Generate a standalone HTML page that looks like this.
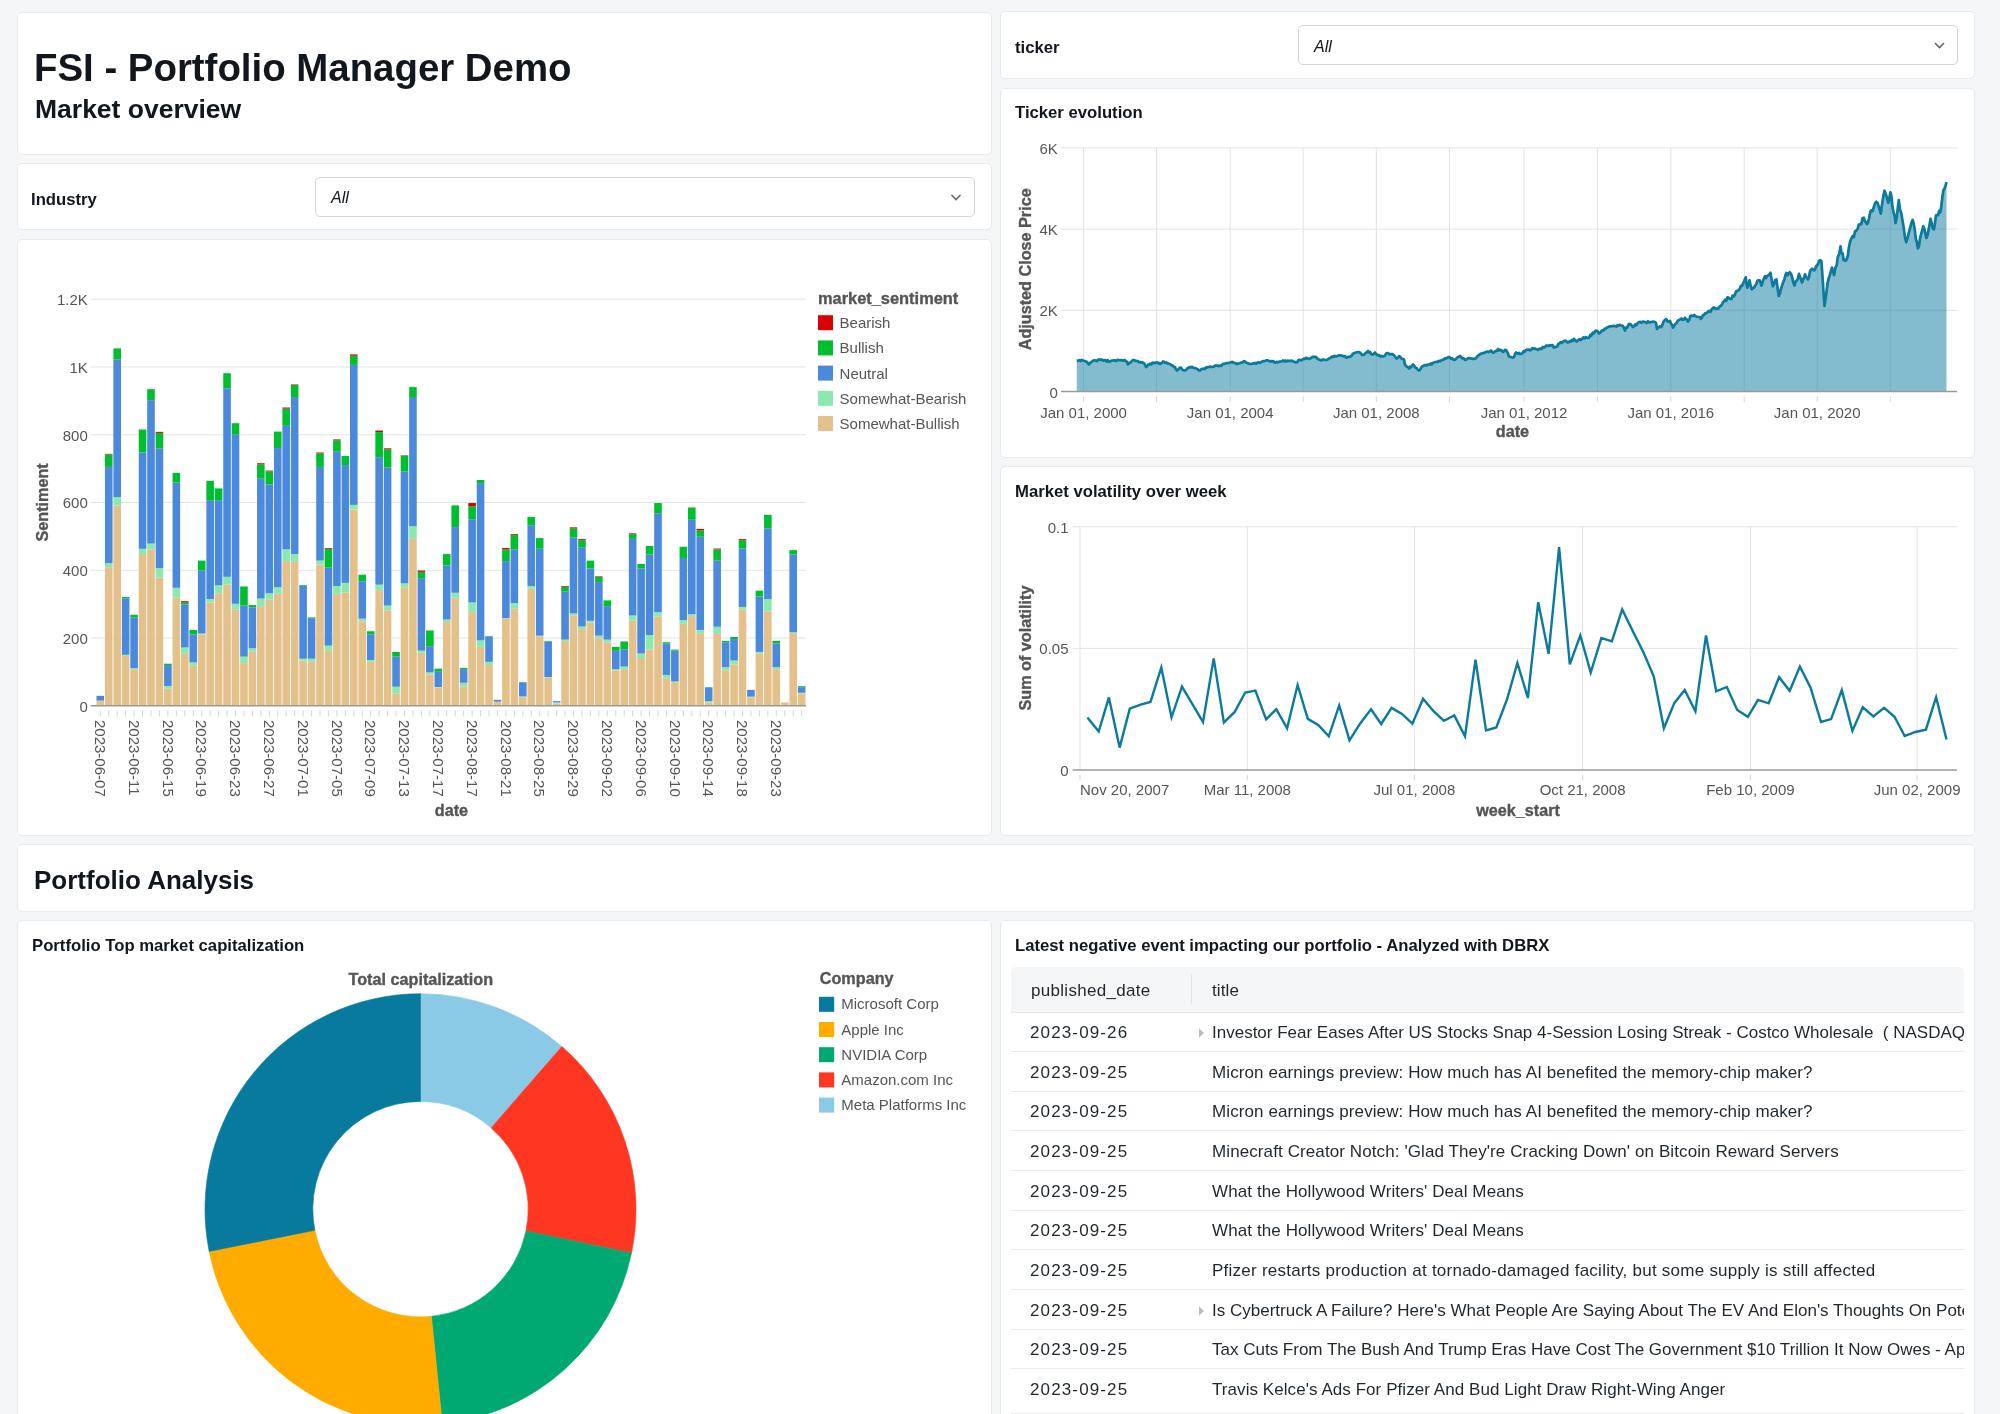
<!DOCTYPE html><html><head><meta charset="utf-8"><style>

*{margin:0;padding:0;box-sizing:border-box}
html,body{width:2000px;height:1414px;overflow:hidden;background:#f5f6f8;font-family:"Liberation Sans", sans-serif;}
.card{position:absolute;background:#fff;border:1px solid #e8eaec;border-radius:5px;overflow:hidden}
.t{position:absolute;white-space:nowrap;line-height:1}
svg{position:absolute;left:0;top:0;will-change:transform}
.t{will-change:transform}
.sel{position:absolute;background:#fff;border:1px solid #cdd6df;border-radius:5px}

</style></head><body>
<div class="card" style="left:17px;top:12px;width:974.5px;height:142.7px"></div>
<div class="card" style="left:17px;top:162.7px;width:974.5px;height:67.80000000000001px"></div>
<div class="card" style="left:17px;top:238.5px;width:974.5px;height:597.7px"></div>
<div class="card" style="left:1000px;top:11.4px;width:974.8px;height:67.6px"></div>
<div class="card" style="left:1000px;top:87.5px;width:974.8px;height:370.6px"></div>
<div class="card" style="left:1000px;top:466.1px;width:974.8px;height:370.1px"></div>
<div class="card" style="left:17px;top:844.2px;width:1957.8px;height:67.5px"></div>
<div class="card" style="left:17px;top:920px;width:974.5px;height:520px"></div>
<div class="card" style="left:1000px;top:920px;width:974.8px;height:520px"></div>
<div class="t" style="left:33.8px;top:48.75px;font-size:38.4px;font-weight:bold;color:#11171c;font-style:normal;letter-spacing:0px;">FSI - Portfolio Manager Demo</div>
<div class="t" style="left:34.6px;top:96.32px;font-size:26.5px;font-weight:bold;color:#11171c;font-style:normal;letter-spacing:0px;">Market overview</div>
<div class="t" style="left:31px;top:191.89px;font-size:16.7px;font-weight:bold;color:#11171c;font-style:normal;letter-spacing:0px;">Industry</div>
<div class="sel" style="left:314.5px;top:177px;width:660px;height:39.5px"></div>
<div class="t" style="left:330.5px;top:189.72px;font-size:16px;font-weight:normal;color:#11171c;font-style:italic;letter-spacing:0px;">All</div>
<div class="t" style="left:1015.4px;top:40.19px;font-size:16.7px;font-weight:bold;color:#11171c;font-style:normal;letter-spacing:0px;">ticker</div>
<div class="sel" style="left:1297.5px;top:25.4px;width:660.5px;height:39.6px"></div>
<div class="t" style="left:1313.7px;top:39.42px;font-size:16px;font-weight:normal;color:#11171c;font-style:italic;letter-spacing:0px;">All</div>
<svg width="2000" height="1414" style="pointer-events:none"><path d="M951.5,195.0 L956,199.5 L960.5,195.0" fill="none" stroke="#62666b" stroke-width="1.6"/></svg>
<svg width="2000" height="1414" style="pointer-events:none"><path d="M1935.0,43.0 L1939.5,47.5 L1944.0,43.0" fill="none" stroke="#62666b" stroke-width="1.6"/></svg>
<div class="t" style="left:34.2px;top:867.07px;font-size:26px;font-weight:bold;color:#11171c;font-style:normal;letter-spacing:0px;">Portfolio Analysis</div>
<svg width="2000" height="1414" style="font-family:'Liberation Sans',sans-serif">
<line x1="90.8" x2="806" y1="638.03" y2="638.03" stroke="#e3e3e3" stroke-width="1"/>
<line x1="90.8" x2="806" y1="570.26" y2="570.26" stroke="#e3e3e3" stroke-width="1"/>
<line x1="90.8" x2="806" y1="502.49" y2="502.49" stroke="#e3e3e3" stroke-width="1"/>
<line x1="90.8" x2="806" y1="434.72" y2="434.72" stroke="#e3e3e3" stroke-width="1"/>
<line x1="90.8" x2="806" y1="366.95" y2="366.95" stroke="#e3e3e3" stroke-width="1"/>
<line x1="90.8" x2="806" y1="299.18" y2="299.18" stroke="#e3e3e3" stroke-width="1"/>
<rect x="96.50" y="700.58" width="7.6" height="5.22" fill="#e4c08b"/>
<rect x="96.50" y="695.87" width="7.6" height="4.71" fill="#4a89dc"/>
<rect x="104.95" y="567.13" width="7.6" height="138.67" fill="#e4c08b"/>
<rect x="104.95" y="563.20" width="7.6" height="3.93" fill="#8ae9ae"/>
<rect x="104.95" y="466.91" width="7.6" height="96.29" fill="#4a89dc"/>
<rect x="104.95" y="454.35" width="7.6" height="12.56" fill="#00bf2f"/>
<rect x="104.95" y="453.83" width="7.6" height="0.52" fill="#d90000"/>
<rect x="113.40" y="505.38" width="7.6" height="200.42" fill="#e4c08b"/>
<rect x="113.40" y="497.00" width="7.6" height="8.37" fill="#8ae9ae"/>
<rect x="113.40" y="359.63" width="7.6" height="137.38" fill="#4a89dc"/>
<rect x="113.40" y="348.37" width="7.6" height="11.25" fill="#00bf2f"/>
<rect x="121.85" y="655.84" width="7.6" height="49.96" fill="#e4c08b"/>
<rect x="121.85" y="654.79" width="7.6" height="1.05" fill="#8ae9ae"/>
<rect x="121.85" y="598.53" width="7.6" height="56.26" fill="#4a89dc"/>
<rect x="121.85" y="596.96" width="7.6" height="1.57" fill="#00bf2f"/>
<rect x="130.30" y="669.18" width="7.6" height="36.62" fill="#e4c08b"/>
<rect x="130.30" y="668.13" width="7.6" height="1.05" fill="#8ae9ae"/>
<rect x="130.30" y="617.37" width="7.6" height="50.76" fill="#4a89dc"/>
<rect x="130.30" y="614.75" width="7.6" height="2.62" fill="#00bf2f"/>
<rect x="138.75" y="554.05" width="7.6" height="151.75" fill="#e4c08b"/>
<rect x="138.75" y="548.81" width="7.6" height="5.23" fill="#8ae9ae"/>
<rect x="138.75" y="452.52" width="7.6" height="96.29" fill="#4a89dc"/>
<rect x="138.75" y="429.49" width="7.6" height="23.03" fill="#00bf2f"/>
<rect x="147.20" y="549.34" width="7.6" height="156.46" fill="#e4c08b"/>
<rect x="147.20" y="543.58" width="7.6" height="5.76" fill="#8ae9ae"/>
<rect x="147.20" y="400.18" width="7.6" height="143.40" fill="#4a89dc"/>
<rect x="147.20" y="389.19" width="7.6" height="10.99" fill="#00bf2f"/>
<rect x="155.65" y="577.60" width="7.6" height="128.20" fill="#e4c08b"/>
<rect x="155.65" y="568.18" width="7.6" height="9.42" fill="#8ae9ae"/>
<rect x="155.65" y="448.59" width="7.6" height="119.58" fill="#4a89dc"/>
<rect x="155.65" y="432.89" width="7.6" height="15.70" fill="#00bf2f"/>
<rect x="155.65" y="431.85" width="7.6" height="1.05" fill="#d90000"/>
<rect x="164.10" y="688.81" width="7.6" height="16.99" fill="#e4c08b"/>
<rect x="164.10" y="685.93" width="7.6" height="2.88" fill="#8ae9ae"/>
<rect x="164.10" y="664.99" width="7.6" height="20.93" fill="#4a89dc"/>
<rect x="164.10" y="663.69" width="7.6" height="1.31" fill="#00bf2f"/>
<rect x="172.55" y="597.75" width="7.6" height="108.05" fill="#e4c08b"/>
<rect x="172.55" y="587.80" width="7.6" height="9.94" fill="#8ae9ae"/>
<rect x="172.55" y="482.61" width="7.6" height="105.19" fill="#4a89dc"/>
<rect x="172.55" y="472.93" width="7.6" height="9.68" fill="#00bf2f"/>
<rect x="181.00" y="653.22" width="7.6" height="52.58" fill="#e4c08b"/>
<rect x="181.00" y="647.46" width="7.6" height="5.76" fill="#8ae9ae"/>
<rect x="181.00" y="604.29" width="7.6" height="43.18" fill="#4a89dc"/>
<rect x="181.00" y="602.19" width="7.6" height="2.09" fill="#00bf2f"/>
<rect x="181.00" y="601.15" width="7.6" height="1.05" fill="#d90000"/>
<rect x="189.45" y="665.78" width="7.6" height="40.02" fill="#e4c08b"/>
<rect x="189.45" y="662.38" width="7.6" height="3.40" fill="#8ae9ae"/>
<rect x="189.45" y="634.38" width="7.6" height="28.00" fill="#4a89dc"/>
<rect x="189.45" y="629.93" width="7.6" height="4.45" fill="#00bf2f"/>
<rect x="197.90" y="634.38" width="7.6" height="71.42" fill="#e4c08b"/>
<rect x="197.90" y="633.59" width="7.6" height="0.79" fill="#8ae9ae"/>
<rect x="197.90" y="570.27" width="7.6" height="63.32" fill="#4a89dc"/>
<rect x="197.90" y="560.59" width="7.6" height="9.68" fill="#00bf2f"/>
<rect x="206.35" y="602.46" width="7.6" height="103.34" fill="#e4c08b"/>
<rect x="206.35" y="599.05" width="7.6" height="3.40" fill="#8ae9ae"/>
<rect x="206.35" y="500.14" width="7.6" height="98.91" fill="#4a89dc"/>
<rect x="206.35" y="480.78" width="7.6" height="19.36" fill="#00bf2f"/>
<rect x="214.80" y="593.30" width="7.6" height="112.50" fill="#e4c08b"/>
<rect x="214.80" y="585.45" width="7.6" height="7.85" fill="#8ae9ae"/>
<rect x="214.80" y="500.14" width="7.6" height="85.30" fill="#4a89dc"/>
<rect x="214.80" y="488.37" width="7.6" height="11.78" fill="#00bf2f"/>
<rect x="223.25" y="584.66" width="7.6" height="121.14" fill="#e4c08b"/>
<rect x="223.25" y="576.81" width="7.6" height="7.85" fill="#8ae9ae"/>
<rect x="223.25" y="388.41" width="7.6" height="188.40" fill="#4a89dc"/>
<rect x="223.25" y="373.23" width="7.6" height="15.18" fill="#00bf2f"/>
<rect x="231.70" y="609.52" width="7.6" height="96.28" fill="#e4c08b"/>
<rect x="231.70" y="603.76" width="7.6" height="5.76" fill="#8ae9ae"/>
<rect x="231.70" y="434.72" width="7.6" height="169.04" fill="#4a89dc"/>
<rect x="231.70" y="423.21" width="7.6" height="11.51" fill="#00bf2f"/>
<rect x="240.15" y="663.16" width="7.6" height="42.64" fill="#e4c08b"/>
<rect x="240.15" y="656.62" width="7.6" height="6.54" fill="#8ae9ae"/>
<rect x="240.15" y="605.60" width="7.6" height="51.03" fill="#4a89dc"/>
<rect x="240.15" y="586.49" width="7.6" height="19.10" fill="#00bf2f"/>
<rect x="248.60" y="651.39" width="7.6" height="54.41" fill="#e4c08b"/>
<rect x="248.60" y="648.25" width="7.6" height="3.14" fill="#8ae9ae"/>
<rect x="248.60" y="607.43" width="7.6" height="40.82" fill="#4a89dc"/>
<rect x="248.60" y="605.07" width="7.6" height="2.36" fill="#00bf2f"/>
<rect x="257.05" y="606.12" width="7.6" height="99.68" fill="#e4c08b"/>
<rect x="257.05" y="598.53" width="7.6" height="7.59" fill="#8ae9ae"/>
<rect x="257.05" y="478.69" width="7.6" height="119.85" fill="#4a89dc"/>
<rect x="257.05" y="464.29" width="7.6" height="14.39" fill="#00bf2f"/>
<rect x="257.05" y="463.25" width="7.6" height="1.05" fill="#d90000"/>
<rect x="265.50" y="599.58" width="7.6" height="106.22" fill="#e4c08b"/>
<rect x="265.50" y="593.30" width="7.6" height="6.28" fill="#8ae9ae"/>
<rect x="265.50" y="484.44" width="7.6" height="108.85" fill="#4a89dc"/>
<rect x="265.50" y="471.36" width="7.6" height="13.08" fill="#00bf2f"/>
<rect x="265.50" y="470.57" width="7.6" height="0.79" fill="#d90000"/>
<rect x="273.95" y="593.82" width="7.6" height="111.98" fill="#e4c08b"/>
<rect x="273.95" y="587.28" width="7.6" height="6.54" fill="#8ae9ae"/>
<rect x="273.95" y="448.07" width="7.6" height="139.21" fill="#4a89dc"/>
<rect x="273.95" y="431.58" width="7.6" height="16.49" fill="#00bf2f"/>
<rect x="282.40" y="561.11" width="7.6" height="144.69" fill="#e4c08b"/>
<rect x="282.40" y="549.34" width="7.6" height="11.78" fill="#8ae9ae"/>
<rect x="282.40" y="425.83" width="7.6" height="123.51" fill="#4a89dc"/>
<rect x="282.40" y="408.56" width="7.6" height="17.27" fill="#00bf2f"/>
<rect x="282.40" y="407.51" width="7.6" height="1.05" fill="#d90000"/>
<rect x="290.85" y="561.90" width="7.6" height="143.90" fill="#e4c08b"/>
<rect x="290.85" y="554.05" width="7.6" height="7.85" fill="#8ae9ae"/>
<rect x="290.85" y="397.04" width="7.6" height="157.00" fill="#4a89dc"/>
<rect x="290.85" y="385.01" width="7.6" height="12.04" fill="#00bf2f"/>
<rect x="290.85" y="384.48" width="7.6" height="0.52" fill="#d90000"/>
<rect x="299.30" y="660.55" width="7.6" height="45.25" fill="#e4c08b"/>
<rect x="299.30" y="658.71" width="7.6" height="1.83" fill="#8ae9ae"/>
<rect x="299.30" y="585.97" width="7.6" height="72.74" fill="#4a89dc"/>
<rect x="299.30" y="585.19" width="7.6" height="0.79" fill="#00bf2f"/>
<rect x="307.75" y="661.85" width="7.6" height="43.95" fill="#e4c08b"/>
<rect x="307.75" y="658.71" width="7.6" height="3.14" fill="#8ae9ae"/>
<rect x="307.75" y="618.16" width="7.6" height="40.56" fill="#4a89dc"/>
<rect x="307.75" y="617.37" width="7.6" height="0.79" fill="#00bf2f"/>
<rect x="316.20" y="564.51" width="7.6" height="141.29" fill="#e4c08b"/>
<rect x="316.20" y="560.59" width="7.6" height="3.93" fill="#8ae9ae"/>
<rect x="316.20" y="466.91" width="7.6" height="93.68" fill="#4a89dc"/>
<rect x="316.20" y="453.30" width="7.6" height="13.61" fill="#00bf2f"/>
<rect x="316.20" y="452.52" width="7.6" height="0.79" fill="#d90000"/>
<rect x="324.65" y="650.86" width="7.6" height="54.94" fill="#e4c08b"/>
<rect x="324.65" y="645.63" width="7.6" height="5.23" fill="#8ae9ae"/>
<rect x="324.65" y="567.65" width="7.6" height="77.98" fill="#4a89dc"/>
<rect x="324.65" y="548.81" width="7.6" height="18.84" fill="#00bf2f"/>
<rect x="324.65" y="548.03" width="7.6" height="0.79" fill="#d90000"/>
<rect x="333.10" y="593.82" width="7.6" height="111.98" fill="#e4c08b"/>
<rect x="333.10" y="585.97" width="7.6" height="7.85" fill="#8ae9ae"/>
<rect x="333.10" y="451.73" width="7.6" height="134.24" fill="#4a89dc"/>
<rect x="333.10" y="440.22" width="7.6" height="11.51" fill="#00bf2f"/>
<rect x="333.10" y="439.43" width="7.6" height="0.79" fill="#d90000"/>
<rect x="341.55" y="592.51" width="7.6" height="113.29" fill="#e4c08b"/>
<rect x="341.55" y="582.83" width="7.6" height="9.68" fill="#8ae9ae"/>
<rect x="341.55" y="465.08" width="7.6" height="117.75" fill="#4a89dc"/>
<rect x="341.55" y="455.92" width="7.6" height="9.16" fill="#00bf2f"/>
<rect x="350.00" y="509.56" width="7.6" height="196.24" fill="#e4c08b"/>
<rect x="350.00" y="504.85" width="7.6" height="4.71" fill="#8ae9ae"/>
<rect x="350.00" y="364.86" width="7.6" height="139.99" fill="#4a89dc"/>
<rect x="350.00" y="355.70" width="7.6" height="9.16" fill="#00bf2f"/>
<rect x="350.00" y="354.39" width="7.6" height="1.31" fill="#d90000"/>
<rect x="358.45" y="621.30" width="7.6" height="84.50" fill="#e4c08b"/>
<rect x="358.45" y="618.68" width="7.6" height="2.62" fill="#8ae9ae"/>
<rect x="358.45" y="581.26" width="7.6" height="37.42" fill="#4a89dc"/>
<rect x="358.45" y="574.72" width="7.6" height="6.54" fill="#00bf2f"/>
<rect x="366.90" y="661.85" width="7.6" height="43.95" fill="#e4c08b"/>
<rect x="366.90" y="660.02" width="7.6" height="1.83" fill="#8ae9ae"/>
<rect x="366.90" y="634.38" width="7.6" height="25.64" fill="#4a89dc"/>
<rect x="366.90" y="631.24" width="7.6" height="3.14" fill="#00bf2f"/>
<rect x="375.35" y="589.90" width="7.6" height="115.90" fill="#e4c08b"/>
<rect x="375.35" y="584.66" width="7.6" height="5.23" fill="#8ae9ae"/>
<rect x="375.35" y="457.23" width="7.6" height="127.43" fill="#4a89dc"/>
<rect x="375.35" y="432.11" width="7.6" height="25.12" fill="#00bf2f"/>
<rect x="375.35" y="430.54" width="7.6" height="1.57" fill="#d90000"/>
<rect x="383.80" y="610.31" width="7.6" height="95.49" fill="#e4c08b"/>
<rect x="383.80" y="605.60" width="7.6" height="4.71" fill="#8ae9ae"/>
<rect x="383.80" y="467.43" width="7.6" height="138.16" fill="#4a89dc"/>
<rect x="383.80" y="449.38" width="7.6" height="18.06" fill="#00bf2f"/>
<rect x="383.80" y="448.33" width="7.6" height="1.05" fill="#d90000"/>
<rect x="392.25" y="693.26" width="7.6" height="12.54" fill="#e4c08b"/>
<rect x="392.25" y="686.71" width="7.6" height="6.54" fill="#8ae9ae"/>
<rect x="392.25" y="656.62" width="7.6" height="30.09" fill="#4a89dc"/>
<rect x="392.25" y="651.91" width="7.6" height="4.71" fill="#00bf2f"/>
<rect x="400.70" y="587.28" width="7.6" height="118.52" fill="#e4c08b"/>
<rect x="400.70" y="583.35" width="7.6" height="3.93" fill="#8ae9ae"/>
<rect x="400.70" y="471.62" width="7.6" height="111.73" fill="#4a89dc"/>
<rect x="400.70" y="455.92" width="7.6" height="15.70" fill="#00bf2f"/>
<rect x="400.70" y="455.40" width="7.6" height="0.52" fill="#d90000"/>
<rect x="409.15" y="538.87" width="7.6" height="166.93" fill="#e4c08b"/>
<rect x="409.15" y="526.31" width="7.6" height="12.56" fill="#8ae9ae"/>
<rect x="409.15" y="397.04" width="7.6" height="129.27" fill="#4a89dc"/>
<rect x="409.15" y="387.10" width="7.6" height="9.94" fill="#00bf2f"/>
<rect x="417.60" y="652.70" width="7.6" height="53.10" fill="#e4c08b"/>
<rect x="417.60" y="650.60" width="7.6" height="2.09" fill="#8ae9ae"/>
<rect x="417.60" y="578.12" width="7.6" height="72.48" fill="#4a89dc"/>
<rect x="417.60" y="571.84" width="7.6" height="6.28" fill="#00bf2f"/>
<rect x="417.60" y="570.53" width="7.6" height="1.31" fill="#d90000"/>
<rect x="426.05" y="674.41" width="7.6" height="31.39" fill="#e4c08b"/>
<rect x="426.05" y="672.32" width="7.6" height="2.09" fill="#8ae9ae"/>
<rect x="426.05" y="646.15" width="7.6" height="26.17" fill="#4a89dc"/>
<rect x="426.05" y="630.45" width="7.6" height="15.70" fill="#00bf2f"/>
<rect x="434.50" y="687.50" width="7.6" height="18.30" fill="#e4c08b"/>
<rect x="434.50" y="686.98" width="7.6" height="0.52" fill="#8ae9ae"/>
<rect x="434.50" y="671.80" width="7.6" height="15.18" fill="#4a89dc"/>
<rect x="434.50" y="668.66" width="7.6" height="3.14" fill="#00bf2f"/>
<rect x="442.95" y="622.08" width="7.6" height="83.72" fill="#e4c08b"/>
<rect x="442.95" y="619.46" width="7.6" height="2.62" fill="#8ae9ae"/>
<rect x="442.95" y="565.56" width="7.6" height="53.90" fill="#4a89dc"/>
<rect x="442.95" y="554.05" width="7.6" height="11.51" fill="#00bf2f"/>
<rect x="451.40" y="597.75" width="7.6" height="108.05" fill="#e4c08b"/>
<rect x="451.40" y="592.77" width="7.6" height="4.97" fill="#8ae9ae"/>
<rect x="451.40" y="527.09" width="7.6" height="65.68" fill="#4a89dc"/>
<rect x="451.40" y="505.38" width="7.6" height="21.72" fill="#00bf2f"/>
<rect x="459.85" y="686.71" width="7.6" height="19.09" fill="#e4c08b"/>
<rect x="459.85" y="682.79" width="7.6" height="3.93" fill="#8ae9ae"/>
<rect x="459.85" y="669.18" width="7.6" height="13.61" fill="#4a89dc"/>
<rect x="459.85" y="667.87" width="7.6" height="1.31" fill="#00bf2f"/>
<rect x="468.30" y="612.14" width="7.6" height="93.66" fill="#e4c08b"/>
<rect x="468.30" y="602.46" width="7.6" height="9.68" fill="#8ae9ae"/>
<rect x="468.30" y="519.24" width="7.6" height="83.21" fill="#4a89dc"/>
<rect x="468.30" y="506.16" width="7.6" height="13.08" fill="#00bf2f"/>
<rect x="468.30" y="503.02" width="7.6" height="3.14" fill="#d90000"/>
<rect x="476.75" y="646.94" width="7.6" height="58.86" fill="#e4c08b"/>
<rect x="476.75" y="640.40" width="7.6" height="6.54" fill="#8ae9ae"/>
<rect x="476.75" y="483.13" width="7.6" height="157.26" fill="#4a89dc"/>
<rect x="476.75" y="479.99" width="7.6" height="3.14" fill="#00bf2f"/>
<rect x="485.20" y="664.99" width="7.6" height="40.81" fill="#e4c08b"/>
<rect x="485.20" y="661.85" width="7.6" height="3.14" fill="#8ae9ae"/>
<rect x="485.20" y="636.47" width="7.6" height="25.38" fill="#4a89dc"/>
<rect x="485.20" y="635.95" width="7.6" height="0.52" fill="#00bf2f"/>
<rect x="493.65" y="701.63" width="7.6" height="4.17" fill="#e4c08b"/>
<rect x="493.65" y="699.80" width="7.6" height="1.83" fill="#4a89dc"/>
<rect x="502.10" y="618.68" width="7.6" height="87.12" fill="#e4c08b"/>
<rect x="502.10" y="618.16" width="7.6" height="0.52" fill="#8ae9ae"/>
<rect x="502.10" y="561.11" width="7.6" height="57.04" fill="#4a89dc"/>
<rect x="502.10" y="549.34" width="7.6" height="11.78" fill="#00bf2f"/>
<rect x="502.10" y="548.03" width="7.6" height="1.31" fill="#d90000"/>
<rect x="510.55" y="608.74" width="7.6" height="97.06" fill="#e4c08b"/>
<rect x="510.55" y="602.98" width="7.6" height="5.76" fill="#8ae9ae"/>
<rect x="510.55" y="549.34" width="7.6" height="53.64" fill="#4a89dc"/>
<rect x="510.55" y="534.94" width="7.6" height="14.39" fill="#00bf2f"/>
<rect x="510.55" y="534.16" width="7.6" height="0.79" fill="#d90000"/>
<rect x="519.00" y="697.18" width="7.6" height="8.62" fill="#e4c08b"/>
<rect x="519.00" y="696.40" width="7.6" height="0.79" fill="#8ae9ae"/>
<rect x="519.00" y="682.27" width="7.6" height="14.13" fill="#4a89dc"/>
<rect x="527.45" y="588.59" width="7.6" height="117.21" fill="#e4c08b"/>
<rect x="527.45" y="585.97" width="7.6" height="2.62" fill="#8ae9ae"/>
<rect x="527.45" y="525.26" width="7.6" height="60.71" fill="#4a89dc"/>
<rect x="527.45" y="516.89" width="7.6" height="8.37" fill="#00bf2f"/>
<rect x="535.90" y="636.21" width="7.6" height="69.59" fill="#e4c08b"/>
<rect x="535.90" y="635.69" width="7.6" height="0.52" fill="#8ae9ae"/>
<rect x="535.90" y="548.81" width="7.6" height="86.87" fill="#4a89dc"/>
<rect x="535.90" y="538.08" width="7.6" height="10.73" fill="#00bf2f"/>
<rect x="544.35" y="677.55" width="7.6" height="28.25" fill="#e4c08b"/>
<rect x="544.35" y="677.03" width="7.6" height="0.52" fill="#8ae9ae"/>
<rect x="544.35" y="641.44" width="7.6" height="35.59" fill="#4a89dc"/>
<rect x="544.35" y="640.92" width="7.6" height="0.52" fill="#00bf2f"/>
<rect x="552.80" y="703.72" width="7.6" height="2.08" fill="#e4c08b"/>
<rect x="552.80" y="702.41" width="7.6" height="1.31" fill="#8ae9ae"/>
<rect x="552.80" y="701.11" width="7.6" height="1.31" fill="#4a89dc"/>
<rect x="561.25" y="640.92" width="7.6" height="64.88" fill="#e4c08b"/>
<rect x="561.25" y="639.61" width="7.6" height="1.31" fill="#8ae9ae"/>
<rect x="561.25" y="591.73" width="7.6" height="47.89" fill="#4a89dc"/>
<rect x="561.25" y="586.76" width="7.6" height="4.97" fill="#00bf2f"/>
<rect x="561.25" y="585.97" width="7.6" height="0.79" fill="#d90000"/>
<rect x="569.70" y="615.28" width="7.6" height="90.52" fill="#e4c08b"/>
<rect x="569.70" y="613.45" width="7.6" height="1.83" fill="#8ae9ae"/>
<rect x="569.70" y="537.56" width="7.6" height="75.88" fill="#4a89dc"/>
<rect x="569.70" y="528.40" width="7.6" height="9.16" fill="#00bf2f"/>
<rect x="569.70" y="527.36" width="7.6" height="1.05" fill="#d90000"/>
<rect x="578.15" y="629.15" width="7.6" height="76.65" fill="#e4c08b"/>
<rect x="578.15" y="626.53" width="7.6" height="2.62" fill="#8ae9ae"/>
<rect x="578.15" y="547.24" width="7.6" height="79.29" fill="#4a89dc"/>
<rect x="578.15" y="540.18" width="7.6" height="7.07" fill="#00bf2f"/>
<rect x="578.15" y="539.13" width="7.6" height="1.05" fill="#d90000"/>
<rect x="586.60" y="622.60" width="7.6" height="83.20" fill="#e4c08b"/>
<rect x="586.60" y="620.77" width="7.6" height="1.83" fill="#8ae9ae"/>
<rect x="586.60" y="568.44" width="7.6" height="52.33" fill="#4a89dc"/>
<rect x="586.60" y="560.59" width="7.6" height="7.85" fill="#00bf2f"/>
<rect x="595.05" y="638.30" width="7.6" height="67.50" fill="#e4c08b"/>
<rect x="595.05" y="635.69" width="7.6" height="2.62" fill="#8ae9ae"/>
<rect x="595.05" y="582.05" width="7.6" height="53.64" fill="#4a89dc"/>
<rect x="595.05" y="576.81" width="7.6" height="5.23" fill="#00bf2f"/>
<rect x="595.05" y="576.29" width="7.6" height="0.52" fill="#d90000"/>
<rect x="603.50" y="642.23" width="7.6" height="63.57" fill="#e4c08b"/>
<rect x="603.50" y="639.61" width="7.6" height="2.62" fill="#8ae9ae"/>
<rect x="603.50" y="606.12" width="7.6" height="33.49" fill="#4a89dc"/>
<rect x="603.50" y="600.36" width="7.6" height="5.76" fill="#00bf2f"/>
<rect x="611.95" y="670.23" width="7.6" height="35.57" fill="#e4c08b"/>
<rect x="611.95" y="669.18" width="7.6" height="1.05" fill="#8ae9ae"/>
<rect x="611.95" y="650.86" width="7.6" height="18.32" fill="#4a89dc"/>
<rect x="611.95" y="646.94" width="7.6" height="3.93" fill="#00bf2f"/>
<rect x="620.40" y="669.18" width="7.6" height="36.62" fill="#e4c08b"/>
<rect x="620.40" y="666.56" width="7.6" height="2.62" fill="#8ae9ae"/>
<rect x="620.40" y="649.29" width="7.6" height="17.27" fill="#4a89dc"/>
<rect x="620.40" y="641.44" width="7.6" height="7.85" fill="#00bf2f"/>
<rect x="628.85" y="620.51" width="7.6" height="85.29" fill="#e4c08b"/>
<rect x="628.85" y="615.54" width="7.6" height="4.97" fill="#8ae9ae"/>
<rect x="628.85" y="538.87" width="7.6" height="76.67" fill="#4a89dc"/>
<rect x="628.85" y="534.16" width="7.6" height="4.71" fill="#00bf2f"/>
<rect x="628.85" y="533.37" width="7.6" height="0.79" fill="#d90000"/>
<rect x="637.30" y="657.93" width="7.6" height="47.87" fill="#e4c08b"/>
<rect x="637.30" y="653.48" width="7.6" height="4.45" fill="#8ae9ae"/>
<rect x="637.30" y="568.44" width="7.6" height="85.04" fill="#4a89dc"/>
<rect x="637.30" y="563.99" width="7.6" height="4.45" fill="#00bf2f"/>
<rect x="645.75" y="649.56" width="7.6" height="56.24" fill="#e4c08b"/>
<rect x="645.75" y="635.16" width="7.6" height="14.39" fill="#8ae9ae"/>
<rect x="645.75" y="554.57" width="7.6" height="80.59" fill="#4a89dc"/>
<rect x="645.75" y="545.93" width="7.6" height="8.64" fill="#00bf2f"/>
<rect x="654.20" y="616.59" width="7.6" height="89.21" fill="#e4c08b"/>
<rect x="654.20" y="612.14" width="7.6" height="4.45" fill="#8ae9ae"/>
<rect x="654.20" y="513.23" width="7.6" height="98.91" fill="#4a89dc"/>
<rect x="654.20" y="503.02" width="7.6" height="10.21" fill="#00bf2f"/>
<rect x="662.65" y="678.34" width="7.6" height="27.46" fill="#e4c08b"/>
<rect x="662.65" y="674.94" width="7.6" height="3.40" fill="#8ae9ae"/>
<rect x="662.65" y="643.54" width="7.6" height="31.40" fill="#4a89dc"/>
<rect x="662.65" y="642.23" width="7.6" height="1.31" fill="#00bf2f"/>
<rect x="671.10" y="682.79" width="7.6" height="23.01" fill="#e4c08b"/>
<rect x="671.10" y="681.48" width="7.6" height="1.31" fill="#8ae9ae"/>
<rect x="671.10" y="650.60" width="7.6" height="30.88" fill="#4a89dc"/>
<rect x="671.10" y="649.56" width="7.6" height="1.05" fill="#00bf2f"/>
<rect x="679.55" y="623.91" width="7.6" height="81.89" fill="#e4c08b"/>
<rect x="679.55" y="619.99" width="7.6" height="3.93" fill="#8ae9ae"/>
<rect x="679.55" y="557.97" width="7.6" height="62.02" fill="#4a89dc"/>
<rect x="679.55" y="546.72" width="7.6" height="11.25" fill="#00bf2f"/>
<rect x="688.00" y="616.06" width="7.6" height="89.74" fill="#e4c08b"/>
<rect x="688.00" y="614.23" width="7.6" height="1.83" fill="#8ae9ae"/>
<rect x="688.00" y="519.77" width="7.6" height="94.46" fill="#4a89dc"/>
<rect x="688.00" y="507.47" width="7.6" height="12.30" fill="#00bf2f"/>
<rect x="696.45" y="633.86" width="7.6" height="71.94" fill="#e4c08b"/>
<rect x="696.45" y="629.93" width="7.6" height="3.93" fill="#8ae9ae"/>
<rect x="696.45" y="536.78" width="7.6" height="93.15" fill="#4a89dc"/>
<rect x="696.45" y="530.23" width="7.6" height="6.54" fill="#00bf2f"/>
<rect x="696.45" y="528.93" width="7.6" height="1.31" fill="#d90000"/>
<rect x="704.90" y="702.41" width="7.6" height="3.39" fill="#e4c08b"/>
<rect x="704.90" y="701.11" width="7.6" height="1.31" fill="#8ae9ae"/>
<rect x="704.90" y="687.24" width="7.6" height="13.87" fill="#4a89dc"/>
<rect x="713.35" y="633.86" width="7.6" height="71.94" fill="#e4c08b"/>
<rect x="713.35" y="626.79" width="7.6" height="7.07" fill="#8ae9ae"/>
<rect x="713.35" y="560.59" width="7.6" height="66.20" fill="#4a89dc"/>
<rect x="713.35" y="549.34" width="7.6" height="11.25" fill="#00bf2f"/>
<rect x="713.35" y="548.55" width="7.6" height="0.79" fill="#d90000"/>
<rect x="721.80" y="670.23" width="7.6" height="35.57" fill="#e4c08b"/>
<rect x="721.80" y="667.09" width="7.6" height="3.14" fill="#8ae9ae"/>
<rect x="721.80" y="642.23" width="7.6" height="24.86" fill="#4a89dc"/>
<rect x="721.80" y="640.92" width="7.6" height="1.31" fill="#00bf2f"/>
<rect x="730.25" y="664.47" width="7.6" height="41.33" fill="#e4c08b"/>
<rect x="730.25" y="660.55" width="7.6" height="3.93" fill="#8ae9ae"/>
<rect x="730.25" y="639.09" width="7.6" height="21.46" fill="#4a89dc"/>
<rect x="730.25" y="637.00" width="7.6" height="2.09" fill="#00bf2f"/>
<rect x="738.70" y="609.52" width="7.6" height="96.28" fill="#e4c08b"/>
<rect x="738.70" y="606.90" width="7.6" height="2.62" fill="#8ae9ae"/>
<rect x="738.70" y="548.55" width="7.6" height="58.35" fill="#4a89dc"/>
<rect x="738.70" y="540.18" width="7.6" height="8.37" fill="#00bf2f"/>
<rect x="738.70" y="539.13" width="7.6" height="1.05" fill="#d90000"/>
<rect x="747.15" y="697.18" width="7.6" height="8.62" fill="#e4c08b"/>
<rect x="747.15" y="696.66" width="7.6" height="0.52" fill="#8ae9ae"/>
<rect x="747.15" y="689.85" width="7.6" height="6.80" fill="#4a89dc"/>
<rect x="755.60" y="653.48" width="7.6" height="52.32" fill="#e4c08b"/>
<rect x="755.60" y="651.91" width="7.6" height="1.57" fill="#8ae9ae"/>
<rect x="755.60" y="596.44" width="7.6" height="55.47" fill="#4a89dc"/>
<rect x="755.60" y="590.68" width="7.6" height="5.76" fill="#00bf2f"/>
<rect x="764.05" y="611.35" width="7.6" height="94.45" fill="#e4c08b"/>
<rect x="764.05" y="599.05" width="7.6" height="12.30" fill="#8ae9ae"/>
<rect x="764.05" y="528.40" width="7.6" height="70.65" fill="#4a89dc"/>
<rect x="764.05" y="514.80" width="7.6" height="13.61" fill="#00bf2f"/>
<rect x="772.50" y="669.18" width="7.6" height="36.62" fill="#e4c08b"/>
<rect x="772.50" y="667.09" width="7.6" height="2.09" fill="#8ae9ae"/>
<rect x="772.50" y="643.54" width="7.6" height="23.55" fill="#4a89dc"/>
<rect x="772.50" y="640.92" width="7.6" height="2.62" fill="#00bf2f"/>
<rect x="780.95" y="702.41" width="7.6" height="3.39" fill="#e4c08b"/>
<rect x="789.40" y="633.07" width="7.6" height="72.73" fill="#e4c08b"/>
<rect x="789.40" y="632.29" width="7.6" height="0.79" fill="#8ae9ae"/>
<rect x="789.40" y="554.57" width="7.6" height="77.72" fill="#4a89dc"/>
<rect x="789.40" y="550.12" width="7.6" height="4.45" fill="#00bf2f"/>
<rect x="797.85" y="693.26" width="7.6" height="12.54" fill="#e4c08b"/>
<rect x="797.85" y="692.73" width="7.6" height="0.52" fill="#8ae9ae"/>
<rect x="797.85" y="687.24" width="7.6" height="5.50" fill="#4a89dc"/>
<rect x="797.85" y="686.19" width="7.6" height="1.05" fill="#00bf2f"/>
<line x1="90.8" x2="806" y1="705.8" y2="705.8" stroke="#9a9a9a" stroke-width="1.5"/>
<text x="87.8" y="711.80" font-size="15" fill="#555" text-anchor="end">0</text>
<text x="87.8" y="644.03" font-size="15" fill="#555" text-anchor="end">200</text>
<text x="87.8" y="576.26" font-size="15" fill="#555" text-anchor="end">400</text>
<text x="87.8" y="508.49" font-size="15" fill="#555" text-anchor="end">600</text>
<text x="87.8" y="440.72" font-size="15" fill="#555" text-anchor="end">800</text>
<text x="87.8" y="372.95" font-size="15" fill="#555" text-anchor="end">1K</text>
<text x="87.8" y="305.18" font-size="15" fill="#555" text-anchor="end">1.2K</text>
<line x1="100.30" x2="100.30" y1="710.5" y2="716.5" stroke="#d6d6d6" stroke-width="1"/>
<line x1="108.75" x2="108.75" y1="710.5" y2="716.5" stroke="#d6d6d6" stroke-width="1"/>
<line x1="117.20" x2="117.20" y1="710.5" y2="716.5" stroke="#d6d6d6" stroke-width="1"/>
<line x1="125.65" x2="125.65" y1="710.5" y2="716.5" stroke="#d6d6d6" stroke-width="1"/>
<line x1="134.10" x2="134.10" y1="710.5" y2="716.5" stroke="#d6d6d6" stroke-width="1"/>
<line x1="142.55" x2="142.55" y1="710.5" y2="716.5" stroke="#d6d6d6" stroke-width="1"/>
<line x1="151.00" x2="151.00" y1="710.5" y2="716.5" stroke="#d6d6d6" stroke-width="1"/>
<line x1="159.45" x2="159.45" y1="710.5" y2="716.5" stroke="#d6d6d6" stroke-width="1"/>
<line x1="167.90" x2="167.90" y1="710.5" y2="716.5" stroke="#d6d6d6" stroke-width="1"/>
<line x1="176.35" x2="176.35" y1="710.5" y2="716.5" stroke="#d6d6d6" stroke-width="1"/>
<line x1="184.80" x2="184.80" y1="710.5" y2="716.5" stroke="#d6d6d6" stroke-width="1"/>
<line x1="193.25" x2="193.25" y1="710.5" y2="716.5" stroke="#d6d6d6" stroke-width="1"/>
<line x1="201.70" x2="201.70" y1="710.5" y2="716.5" stroke="#d6d6d6" stroke-width="1"/>
<line x1="210.15" x2="210.15" y1="710.5" y2="716.5" stroke="#d6d6d6" stroke-width="1"/>
<line x1="218.60" x2="218.60" y1="710.5" y2="716.5" stroke="#d6d6d6" stroke-width="1"/>
<line x1="227.05" x2="227.05" y1="710.5" y2="716.5" stroke="#d6d6d6" stroke-width="1"/>
<line x1="235.50" x2="235.50" y1="710.5" y2="716.5" stroke="#d6d6d6" stroke-width="1"/>
<line x1="243.95" x2="243.95" y1="710.5" y2="716.5" stroke="#d6d6d6" stroke-width="1"/>
<line x1="252.40" x2="252.40" y1="710.5" y2="716.5" stroke="#d6d6d6" stroke-width="1"/>
<line x1="260.85" x2="260.85" y1="710.5" y2="716.5" stroke="#d6d6d6" stroke-width="1"/>
<line x1="269.30" x2="269.30" y1="710.5" y2="716.5" stroke="#d6d6d6" stroke-width="1"/>
<line x1="277.75" x2="277.75" y1="710.5" y2="716.5" stroke="#d6d6d6" stroke-width="1"/>
<line x1="286.20" x2="286.20" y1="710.5" y2="716.5" stroke="#d6d6d6" stroke-width="1"/>
<line x1="294.65" x2="294.65" y1="710.5" y2="716.5" stroke="#d6d6d6" stroke-width="1"/>
<line x1="303.10" x2="303.10" y1="710.5" y2="716.5" stroke="#d6d6d6" stroke-width="1"/>
<line x1="311.55" x2="311.55" y1="710.5" y2="716.5" stroke="#d6d6d6" stroke-width="1"/>
<line x1="320.00" x2="320.00" y1="710.5" y2="716.5" stroke="#d6d6d6" stroke-width="1"/>
<line x1="328.45" x2="328.45" y1="710.5" y2="716.5" stroke="#d6d6d6" stroke-width="1"/>
<line x1="336.90" x2="336.90" y1="710.5" y2="716.5" stroke="#d6d6d6" stroke-width="1"/>
<line x1="345.35" x2="345.35" y1="710.5" y2="716.5" stroke="#d6d6d6" stroke-width="1"/>
<line x1="353.80" x2="353.80" y1="710.5" y2="716.5" stroke="#d6d6d6" stroke-width="1"/>
<line x1="362.25" x2="362.25" y1="710.5" y2="716.5" stroke="#d6d6d6" stroke-width="1"/>
<line x1="370.70" x2="370.70" y1="710.5" y2="716.5" stroke="#d6d6d6" stroke-width="1"/>
<line x1="379.15" x2="379.15" y1="710.5" y2="716.5" stroke="#d6d6d6" stroke-width="1"/>
<line x1="387.60" x2="387.60" y1="710.5" y2="716.5" stroke="#d6d6d6" stroke-width="1"/>
<line x1="396.05" x2="396.05" y1="710.5" y2="716.5" stroke="#d6d6d6" stroke-width="1"/>
<line x1="404.50" x2="404.50" y1="710.5" y2="716.5" stroke="#d6d6d6" stroke-width="1"/>
<line x1="412.95" x2="412.95" y1="710.5" y2="716.5" stroke="#d6d6d6" stroke-width="1"/>
<line x1="421.40" x2="421.40" y1="710.5" y2="716.5" stroke="#d6d6d6" stroke-width="1"/>
<line x1="429.85" x2="429.85" y1="710.5" y2="716.5" stroke="#d6d6d6" stroke-width="1"/>
<line x1="438.30" x2="438.30" y1="710.5" y2="716.5" stroke="#d6d6d6" stroke-width="1"/>
<line x1="446.75" x2="446.75" y1="710.5" y2="716.5" stroke="#d6d6d6" stroke-width="1"/>
<line x1="455.20" x2="455.20" y1="710.5" y2="716.5" stroke="#d6d6d6" stroke-width="1"/>
<line x1="463.65" x2="463.65" y1="710.5" y2="716.5" stroke="#d6d6d6" stroke-width="1"/>
<line x1="472.10" x2="472.10" y1="710.5" y2="716.5" stroke="#d6d6d6" stroke-width="1"/>
<line x1="480.55" x2="480.55" y1="710.5" y2="716.5" stroke="#d6d6d6" stroke-width="1"/>
<line x1="489.00" x2="489.00" y1="710.5" y2="716.5" stroke="#d6d6d6" stroke-width="1"/>
<line x1="497.45" x2="497.45" y1="710.5" y2="716.5" stroke="#d6d6d6" stroke-width="1"/>
<line x1="505.90" x2="505.90" y1="710.5" y2="716.5" stroke="#d6d6d6" stroke-width="1"/>
<line x1="514.35" x2="514.35" y1="710.5" y2="716.5" stroke="#d6d6d6" stroke-width="1"/>
<line x1="522.80" x2="522.80" y1="710.5" y2="716.5" stroke="#d6d6d6" stroke-width="1"/>
<line x1="531.25" x2="531.25" y1="710.5" y2="716.5" stroke="#d6d6d6" stroke-width="1"/>
<line x1="539.70" x2="539.70" y1="710.5" y2="716.5" stroke="#d6d6d6" stroke-width="1"/>
<line x1="548.15" x2="548.15" y1="710.5" y2="716.5" stroke="#d6d6d6" stroke-width="1"/>
<line x1="556.60" x2="556.60" y1="710.5" y2="716.5" stroke="#d6d6d6" stroke-width="1"/>
<line x1="565.05" x2="565.05" y1="710.5" y2="716.5" stroke="#d6d6d6" stroke-width="1"/>
<line x1="573.50" x2="573.50" y1="710.5" y2="716.5" stroke="#d6d6d6" stroke-width="1"/>
<line x1="581.95" x2="581.95" y1="710.5" y2="716.5" stroke="#d6d6d6" stroke-width="1"/>
<line x1="590.40" x2="590.40" y1="710.5" y2="716.5" stroke="#d6d6d6" stroke-width="1"/>
<line x1="598.85" x2="598.85" y1="710.5" y2="716.5" stroke="#d6d6d6" stroke-width="1"/>
<line x1="607.30" x2="607.30" y1="710.5" y2="716.5" stroke="#d6d6d6" stroke-width="1"/>
<line x1="615.75" x2="615.75" y1="710.5" y2="716.5" stroke="#d6d6d6" stroke-width="1"/>
<line x1="624.20" x2="624.20" y1="710.5" y2="716.5" stroke="#d6d6d6" stroke-width="1"/>
<line x1="632.65" x2="632.65" y1="710.5" y2="716.5" stroke="#d6d6d6" stroke-width="1"/>
<line x1="641.10" x2="641.10" y1="710.5" y2="716.5" stroke="#d6d6d6" stroke-width="1"/>
<line x1="649.55" x2="649.55" y1="710.5" y2="716.5" stroke="#d6d6d6" stroke-width="1"/>
<line x1="658.00" x2="658.00" y1="710.5" y2="716.5" stroke="#d6d6d6" stroke-width="1"/>
<line x1="666.45" x2="666.45" y1="710.5" y2="716.5" stroke="#d6d6d6" stroke-width="1"/>
<line x1="674.90" x2="674.90" y1="710.5" y2="716.5" stroke="#d6d6d6" stroke-width="1"/>
<line x1="683.35" x2="683.35" y1="710.5" y2="716.5" stroke="#d6d6d6" stroke-width="1"/>
<line x1="691.80" x2="691.80" y1="710.5" y2="716.5" stroke="#d6d6d6" stroke-width="1"/>
<line x1="700.25" x2="700.25" y1="710.5" y2="716.5" stroke="#d6d6d6" stroke-width="1"/>
<line x1="708.70" x2="708.70" y1="710.5" y2="716.5" stroke="#d6d6d6" stroke-width="1"/>
<line x1="717.15" x2="717.15" y1="710.5" y2="716.5" stroke="#d6d6d6" stroke-width="1"/>
<line x1="725.60" x2="725.60" y1="710.5" y2="716.5" stroke="#d6d6d6" stroke-width="1"/>
<line x1="734.05" x2="734.05" y1="710.5" y2="716.5" stroke="#d6d6d6" stroke-width="1"/>
<line x1="742.50" x2="742.50" y1="710.5" y2="716.5" stroke="#d6d6d6" stroke-width="1"/>
<line x1="750.95" x2="750.95" y1="710.5" y2="716.5" stroke="#d6d6d6" stroke-width="1"/>
<line x1="759.40" x2="759.40" y1="710.5" y2="716.5" stroke="#d6d6d6" stroke-width="1"/>
<line x1="767.85" x2="767.85" y1="710.5" y2="716.5" stroke="#d6d6d6" stroke-width="1"/>
<line x1="776.30" x2="776.30" y1="710.5" y2="716.5" stroke="#d6d6d6" stroke-width="1"/>
<line x1="784.75" x2="784.75" y1="710.5" y2="716.5" stroke="#d6d6d6" stroke-width="1"/>
<line x1="793.20" x2="793.20" y1="710.5" y2="716.5" stroke="#d6d6d6" stroke-width="1"/>
<line x1="801.65" x2="801.65" y1="710.5" y2="716.5" stroke="#d6d6d6" stroke-width="1"/>
<text transform="translate(95.00,720) rotate(90)" font-size="15" fill="#555" text-anchor="start">2023-06-07</text>
<text transform="translate(128.80,720) rotate(90)" font-size="15" fill="#555" text-anchor="start">2023-06-11</text>
<text transform="translate(162.60,720) rotate(90)" font-size="15" fill="#555" text-anchor="start">2023-06-15</text>
<text transform="translate(196.40,720) rotate(90)" font-size="15" fill="#555" text-anchor="start">2023-06-19</text>
<text transform="translate(230.20,720) rotate(90)" font-size="15" fill="#555" text-anchor="start">2023-06-23</text>
<text transform="translate(264.00,720) rotate(90)" font-size="15" fill="#555" text-anchor="start">2023-06-27</text>
<text transform="translate(297.80,720) rotate(90)" font-size="15" fill="#555" text-anchor="start">2023-07-01</text>
<text transform="translate(331.60,720) rotate(90)" font-size="15" fill="#555" text-anchor="start">2023-07-05</text>
<text transform="translate(365.40,720) rotate(90)" font-size="15" fill="#555" text-anchor="start">2023-07-09</text>
<text transform="translate(399.20,720) rotate(90)" font-size="15" fill="#555" text-anchor="start">2023-07-13</text>
<text transform="translate(433.00,720) rotate(90)" font-size="15" fill="#555" text-anchor="start">2023-07-17</text>
<text transform="translate(466.80,720) rotate(90)" font-size="15" fill="#555" text-anchor="start">2023-08-17</text>
<text transform="translate(500.60,720) rotate(90)" font-size="15" fill="#555" text-anchor="start">2023-08-21</text>
<text transform="translate(534.40,720) rotate(90)" font-size="15" fill="#555" text-anchor="start">2023-08-25</text>
<text transform="translate(568.20,720) rotate(90)" font-size="15" fill="#555" text-anchor="start">2023-08-29</text>
<text transform="translate(602.00,720) rotate(90)" font-size="15" fill="#555" text-anchor="start">2023-09-02</text>
<text transform="translate(635.80,720) rotate(90)" font-size="15" fill="#555" text-anchor="start">2023-09-06</text>
<text transform="translate(669.60,720) rotate(90)" font-size="15" fill="#555" text-anchor="start">2023-09-10</text>
<text transform="translate(703.40,720) rotate(90)" font-size="15" fill="#555" text-anchor="start">2023-09-14</text>
<text transform="translate(737.20,720) rotate(90)" font-size="15" fill="#555" text-anchor="start">2023-09-18</text>
<text transform="translate(771.00,720) rotate(90)" font-size="15" fill="#555" text-anchor="start">2023-09-23</text>
<text x="451.4" y="815.5" font-size="16.2" font-weight="bold" fill="#555" stroke="#555" stroke-width="0.35" text-anchor="middle">date</text>
<text transform="translate(47.6,502.4) rotate(-90)" font-size="16.2" font-weight="bold" fill="#555" stroke="#555" stroke-width="0.35" text-anchor="middle">Sentiment</text>
<text x="818" y="303.8" font-size="16.4" font-weight="bold" fill="#555" stroke="#555" stroke-width="0.35">market_sentiment</text>
<rect x="818" y="315.20" width="15" height="15" fill="#d90000"/>
<text x="839.6" y="328.20" font-size="15" fill="#555">Bearish</text>
<rect x="818" y="340.40" width="15" height="15" fill="#00bf2f"/>
<text x="839.6" y="353.40" font-size="15" fill="#555">Bullish</text>
<rect x="818" y="365.60" width="15" height="15" fill="#4a89dc"/>
<text x="839.6" y="378.60" font-size="15" fill="#555">Neutral</text>
<rect x="818" y="390.80" width="15" height="15" fill="#8ae9ae"/>
<text x="839.6" y="403.80" font-size="15" fill="#555">Somewhat-Bearish</text>
<rect x="818" y="416.00" width="15" height="15" fill="#e4c08b"/>
<text x="839.6" y="429.00" font-size="15" fill="#555">Somewhat-Bullish</text>
<g>
<line x1="1061" x2="1957" y1="310.30" y2="310.30" stroke="#e2e2e2" stroke-width="1"/>
<line x1="1061" x2="1957" y1="229.10" y2="229.10" stroke="#e2e2e2" stroke-width="1"/>
<line x1="1061" x2="1957" y1="147.90" y2="147.90" stroke="#e2e2e2" stroke-width="1"/>
<line x1="1083.60" x2="1083.60" y1="148" y2="391.5" stroke="#e2e2e2" stroke-width="1"/>
<line x1="1083.60" x2="1083.60" y1="396.5" y2="402" stroke="#d6d6d6" stroke-width="1"/>
<line x1="1156.60" x2="1156.60" y1="148" y2="391.5" stroke="#e2e2e2" stroke-width="1"/>
<line x1="1156.60" x2="1156.60" y1="396.5" y2="402" stroke="#d6d6d6" stroke-width="1"/>
<line x1="1230.20" x2="1230.20" y1="148" y2="391.5" stroke="#e2e2e2" stroke-width="1"/>
<line x1="1230.20" x2="1230.20" y1="396.5" y2="402" stroke="#d6d6d6" stroke-width="1"/>
<line x1="1303.20" x2="1303.20" y1="148" y2="391.5" stroke="#e2e2e2" stroke-width="1"/>
<line x1="1303.20" x2="1303.20" y1="396.5" y2="402" stroke="#d6d6d6" stroke-width="1"/>
<line x1="1376.30" x2="1376.30" y1="148" y2="391.5" stroke="#e2e2e2" stroke-width="1"/>
<line x1="1376.30" x2="1376.30" y1="396.5" y2="402" stroke="#d6d6d6" stroke-width="1"/>
<line x1="1449.50" x2="1449.50" y1="148" y2="391.5" stroke="#e2e2e2" stroke-width="1"/>
<line x1="1449.50" x2="1449.50" y1="396.5" y2="402" stroke="#d6d6d6" stroke-width="1"/>
<line x1="1524.00" x2="1524.00" y1="148" y2="391.5" stroke="#e2e2e2" stroke-width="1"/>
<line x1="1524.00" x2="1524.00" y1="396.5" y2="402" stroke="#d6d6d6" stroke-width="1"/>
<line x1="1597.40" x2="1597.40" y1="148" y2="391.5" stroke="#e2e2e2" stroke-width="1"/>
<line x1="1597.40" x2="1597.40" y1="396.5" y2="402" stroke="#d6d6d6" stroke-width="1"/>
<line x1="1670.80" x2="1670.80" y1="148" y2="391.5" stroke="#e2e2e2" stroke-width="1"/>
<line x1="1670.80" x2="1670.80" y1="396.5" y2="402" stroke="#d6d6d6" stroke-width="1"/>
<line x1="1744.20" x2="1744.20" y1="148" y2="391.5" stroke="#e2e2e2" stroke-width="1"/>
<line x1="1744.20" x2="1744.20" y1="396.5" y2="402" stroke="#d6d6d6" stroke-width="1"/>
<line x1="1817.20" x2="1817.20" y1="148" y2="391.5" stroke="#e2e2e2" stroke-width="1"/>
<line x1="1817.20" x2="1817.20" y1="396.5" y2="402" stroke="#d6d6d6" stroke-width="1"/>
<line x1="1890.30" x2="1890.30" y1="148" y2="391.5" stroke="#e2e2e2" stroke-width="1"/>
<line x1="1890.30" x2="1890.30" y1="396.5" y2="402" stroke="#d6d6d6" stroke-width="1"/>
<path d="M1076.8,361.0 L1078.0,360.6 L1079.3,360.2 L1080.5,361.0 L1081.8,359.9 L1083.0,360.5 L1084.0,360.8 L1085.0,361.0 L1086.0,361.6 L1087.0,362.0 L1088.0,363.6 L1089.0,364.5 L1090.0,362.7 L1091.0,362.4 L1092.0,361.5 L1093.2,360.5 L1094.5,360.3 L1095.8,360.6 L1097.0,361.1 L1098.2,359.6 L1099.5,359.5 L1100.8,360.0 L1102.0,359.5 L1103.1,360.6 L1104.3,360.2 L1105.4,360.2 L1106.6,361.5 L1107.7,360.1 L1108.9,361.8 L1110.0,361.5 L1111.2,360.9 L1112.5,360.5 L1113.8,360.3 L1115.0,360.4 L1116.2,361.1 L1117.5,359.8 L1118.8,360.3 L1120.0,360.0 L1121.2,360.4 L1122.4,360.2 L1123.6,360.7 L1124.8,360.0 L1126.0,361.0 L1127.0,362.0 L1128.0,364.5 L1129.2,362.9 L1130.5,362.6 L1131.8,361.0 L1133.0,360.0 L1134.2,360.0 L1135.3,360.8 L1136.5,360.9 L1137.7,361.0 L1138.8,362.2 L1140.0,362.0 L1141.0,362.6 L1142.0,362.1 L1143.0,362.9 L1144.0,363.0 L1145.0,365.0 L1146.0,367.0 L1147.0,366.4 L1148.0,364.5 L1149.1,364.6 L1150.3,363.6 L1151.4,364.4 L1152.6,362.7 L1153.7,362.9 L1154.9,363.2 L1156.0,362.5 L1157.0,362.3 L1158.0,363.2 L1159.0,362.9 L1160.0,364.0 L1161.0,363.4 L1162.0,362.8 L1163.0,361.5 L1164.2,362.0 L1165.3,363.0 L1166.5,362.4 L1167.7,363.5 L1168.8,363.7 L1170.0,364.0 L1171.2,364.9 L1172.5,365.4 L1173.8,366.8 L1175.0,367.0 L1176.0,369.4 L1177.0,370.5 L1178.0,369.5 L1179.0,368.8 L1180.0,367.5 L1181.0,367.6 L1182.0,369.3 L1183.0,370.0 L1184.0,370.5 L1185.2,370.5 L1186.4,369.6 L1187.6,368.1 L1188.8,367.5 L1190.0,367.0 L1191.0,367.5 L1192.0,366.7 L1193.0,367.7 L1194.0,368.0 L1195.2,368.1 L1196.5,368.7 L1197.8,369.2 L1199.0,370.5 L1200.2,370.5 L1201.4,369.0 L1202.7,368.8 L1203.9,368.6 L1205.1,368.9 L1206.3,367.2 L1207.6,367.3 L1208.8,367.0 L1210.0,366.5 L1211.2,367.0 L1212.5,366.8 L1213.8,366.7 L1215.0,365.6 L1216.2,365.7 L1217.5,365.5 L1218.8,366.2 L1220.0,365.5 L1221.2,365.9 L1222.5,364.2 L1223.8,363.8 L1225.0,363.6 L1226.2,363.2 L1227.5,363.2 L1228.8,363.0 L1230.0,362.5 L1231.1,362.2 L1232.3,361.9 L1233.4,362.8 L1234.6,362.9 L1235.7,363.3 L1236.9,364.1 L1238.0,363.5 L1239.2,363.5 L1240.3,362.9 L1241.5,362.7 L1242.7,362.5 L1243.8,361.1 L1245.0,361.5 L1246.2,362.7 L1247.4,363.0 L1248.6,363.6 L1249.8,364.0 L1251.0,364.0 L1252.3,363.7 L1253.6,363.5 L1254.9,362.9 L1256.1,363.7 L1257.4,362.6 L1258.7,362.4 L1260.0,363.0 L1261.2,362.0 L1262.5,361.4 L1263.8,361.2 L1265.0,361.0 L1266.2,360.4 L1267.5,360.4 L1268.8,360.8 L1270.0,361.5 L1271.1,361.0 L1272.3,361.6 L1273.4,361.1 L1274.6,362.7 L1275.7,362.4 L1276.9,361.8 L1278.0,362.5 L1279.2,361.7 L1280.3,361.6 L1281.5,361.3 L1282.7,360.5 L1283.8,361.4 L1285.0,360.5 L1286.2,361.5 L1287.5,360.7 L1288.8,360.8 L1290.0,361.0 L1291.2,360.6 L1292.4,360.9 L1293.6,361.6 L1294.8,361.8 L1296.0,362.5 L1297.0,362.4 L1298.0,360.7 L1299.0,359.8 L1300.0,360.0 L1301.2,360.5 L1302.5,359.5 L1303.8,358.6 L1305.0,359.0 L1306.2,357.8 L1307.5,358.5 L1308.8,359.0 L1310.0,358.5 L1311.2,358.0 L1312.5,356.9 L1313.8,356.8 L1315.0,356.8 L1316.2,357.0 L1317.5,358.9 L1318.8,359.3 L1320.0,360.0 L1321.2,360.5 L1322.5,359.7 L1323.8,359.5 L1325.0,360.0 L1326.2,360.0 L1327.3,359.7 L1328.5,358.9 L1329.7,358.2 L1330.8,357.7 L1332.0,356.5 L1333.3,356.9 L1334.6,355.9 L1335.9,356.4 L1337.2,356.0 L1338.5,355.4 L1339.8,355.3 L1341.1,355.7 L1342.4,355.7 L1343.7,356.4 L1345.0,356.0 L1346.0,357.6 L1347.0,357.5 L1348.1,356.8 L1349.3,357.0 L1350.4,356.5 L1351.6,355.8 L1352.7,354.0 L1353.9,353.1 L1355.0,353.0 L1356.2,352.3 L1357.5,352.2 L1358.8,352.1 L1360.0,352.5 L1361.0,353.6 L1362.0,354.9 L1363.0,355.0 L1364.2,354.6 L1365.5,353.0 L1366.8,352.3 L1368.0,351.0 L1369.0,352.5 L1370.0,351.9 L1371.0,353.9 L1372.0,354.5 L1373.0,354.6 L1374.0,353.7 L1375.0,352.5 L1376.0,354.0 L1377.0,354.5 L1378.0,355.5 L1379.2,355.2 L1380.5,356.5 L1381.8,355.9 L1383.0,356.5 L1384.0,356.2 L1385.0,355.6 L1386.0,353.7 L1387.0,353.0 L1388.2,353.1 L1389.5,354.4 L1390.8,354.2 L1392.0,354.0 L1393.0,354.4 L1394.0,355.3 L1395.0,356.4 L1396.0,358.0 L1397.0,358.4 L1398.0,357.8 L1399.0,356.2 L1400.0,356.5 L1401.0,357.8 L1402.0,358.9 L1403.0,359.0 L1404.0,359.5 L1405.0,365.0 L1406.0,365.6 L1407.0,366.8 L1408.0,367.0 L1409.0,368.5 L1410.0,366.7 L1411.0,367.3 L1412.0,365.7 L1413.0,364.5 L1414.2,365.7 L1415.4,367.6 L1416.6,368.0 L1417.8,369.9 L1419.0,370.5 L1420.0,369.9 L1421.0,367.8 L1422.0,366.7 L1423.0,366.0 L1424.2,365.4 L1425.3,365.1 L1426.5,365.4 L1427.7,364.6 L1428.8,364.6 L1430.0,364.5 L1431.0,363.4 L1432.0,364.2 L1433.0,362.8 L1434.0,362.5 L1435.2,362.0 L1436.5,361.9 L1437.7,362.0 L1438.9,360.8 L1440.2,361.3 L1441.4,360.2 L1442.6,359.9 L1443.8,359.5 L1445.1,358.2 L1446.3,358.5 L1447.5,357.7 L1448.8,357.0 L1450.0,357.5 L1451.0,358.7 L1452.0,358.2 L1453.0,359.3 L1454.0,360.0 L1455.2,359.6 L1456.4,358.5 L1457.6,357.3 L1458.8,356.8 L1460.0,356.0 L1461.2,357.1 L1462.5,358.5 L1463.8,358.3 L1465.0,360.0 L1466.2,359.6 L1467.5,358.6 L1468.8,358.1 L1470.0,358.0 L1471.0,358.7 L1472.0,358.5 L1473.0,358.9 L1474.0,359.0 L1475.2,358.5 L1476.4,357.8 L1477.6,355.9 L1478.8,355.2 L1480.0,354.0 L1481.2,353.6 L1482.4,353.2 L1483.7,353.2 L1484.9,352.4 L1486.1,352.1 L1487.3,351.6 L1488.6,352.1 L1489.8,351.3 L1491.0,350.5 L1492.0,351.9 L1493.0,352.7 L1494.0,352.5 L1495.0,351.2 L1496.0,350.9 L1497.0,350.8 L1498.0,349.0 L1499.2,350.4 L1500.5,349.8 L1501.8,350.5 L1503.0,352.0 L1504.0,351.2 L1505.0,349.8 L1506.0,350.0 L1507.0,351.7 L1508.0,353.5 L1509.0,356.5 L1510.2,356.9 L1511.5,357.3 L1512.8,357.6 L1514.0,357.0 L1515.0,354.1 L1516.0,352.5 L1517.0,353.3 L1518.0,353.6 L1519.0,352.9 L1520.0,354.0 L1521.2,353.9 L1522.4,353.3 L1523.6,351.1 L1524.8,351.7 L1526.0,350.0 L1527.3,349.6 L1528.6,349.5 L1529.9,350.3 L1531.1,349.8 L1532.4,348.2 L1533.7,348.6 L1535.0,348.5 L1536.0,349.0 L1537.0,349.2 L1538.0,350.0 L1539.2,348.9 L1540.4,348.6 L1541.6,349.0 L1542.8,347.0 L1544.0,347.6 L1545.2,346.9 L1546.4,345.5 L1547.6,345.6 L1548.8,345.8 L1550.0,345.0 L1551.2,345.5 L1552.5,345.1 L1553.8,347.5 L1555.0,347.0 L1556.1,346.8 L1557.3,346.4 L1558.4,343.8 L1559.6,343.4 L1560.7,342.1 L1561.9,342.9 L1563.0,341.5 L1564.1,341.0 L1565.3,340.7 L1566.4,341.3 L1567.6,342.4 L1568.7,342.2 L1569.9,341.0 L1571.0,341.5 L1572.0,339.9 L1573.0,340.8 L1574.0,339.0 L1575.0,340.0 L1576.0,341.1 L1577.0,341.5 L1578.3,339.9 L1579.6,339.2 L1580.9,340.0 L1582.1,338.8 L1583.4,337.3 L1584.7,338.6 L1586.0,337.0 L1587.0,337.8 L1588.0,338.0 L1589.1,337.6 L1590.3,334.9 L1591.4,335.6 L1592.6,332.7 L1593.7,333.5 L1594.9,331.5 L1596.0,330.5 L1597.0,330.7 L1598.0,331.9 L1599.0,333.4 L1600.0,333.0 L1601.2,331.5 L1602.4,330.3 L1603.6,330.4 L1604.8,328.7 L1606.0,328.5 L1607.3,327.2 L1608.6,326.9 L1609.9,326.3 L1611.1,326.3 L1612.4,326.2 L1613.7,325.9 L1615.0,326.0 L1616.2,326.6 L1617.3,325.3 L1618.5,325.8 L1619.7,324.8 L1620.8,325.2 L1622.0,325.5 L1623.0,325.9 L1624.0,328.2 L1625.0,330.5 L1626.0,327.7 L1627.0,327.8 L1628.0,325.8 L1629.0,324.0 L1630.2,323.8 L1631.5,325.2 L1632.8,327.0 L1634.0,326.5 L1635.2,324.4 L1636.5,325.1 L1637.8,322.9 L1639.0,322.0 L1640.3,321.9 L1641.5,322.8 L1642.8,321.6 L1644.1,321.8 L1645.4,322.3 L1646.6,323.0 L1647.9,321.3 L1649.2,322.5 L1650.5,322.1 L1651.7,321.9 L1653.0,321.5 L1654.0,321.7 L1655.0,322.1 L1656.0,323.0 L1657.0,329.0 L1658.0,327.4 L1659.0,327.1 L1660.0,326.4 L1661.0,327.0 L1662.0,325.9 L1663.0,322.9 L1664.0,320.8 L1665.0,320.0 L1666.2,319.1 L1667.5,321.4 L1668.8,321.7 L1670.0,321.0 L1671.0,323.6 L1672.0,324.8 L1673.0,327.5 L1674.2,325.3 L1675.4,324.0 L1676.6,322.9 L1677.8,320.6 L1679.0,320.0 L1680.2,319.4 L1681.4,318.5 L1682.6,319.9 L1683.8,319.5 L1685.0,317.8 L1686.0,319.2 L1687.0,319.6 L1688.0,321.5 L1689.2,320.0 L1690.3,316.0 L1691.6,315.6 L1692.9,315.9 L1694.2,315.0 L1695.4,316.2 L1696.7,316.6 L1698.0,316.9 L1699.3,317.0 L1700.0,317.1 L1700.8,318.9 L1701.8,317.8 L1702.9,315.3 L1703.9,314.9 L1705.0,313.3 L1706.0,313.3 L1707.1,312.7 L1708.2,311.3 L1709.4,310.9 L1710.5,312.0 L1711.7,309.4 L1712.8,308.0 L1713.9,307.4 L1715.0,308.7 L1716.2,308.7 L1717.3,308.8 L1718.4,308.3 L1719.5,306.8 L1720.7,305.7 L1721.8,305.0 L1722.9,302.2 L1724.0,301.3 L1725.1,299.8 L1726.2,301.0 L1727.4,297.3 L1728.5,297.5 L1729.5,298.7 L1730.5,299.0 L1731.5,299.0 L1732.6,295.6 L1733.8,296.4 L1734.9,294.7 L1736.0,291.5 L1737.2,290.8 L1738.4,290.1 L1739.6,289.2 L1740.8,285.8 L1742.0,285.9 L1743.3,283.1 L1744.5,280.2 L1745.8,277.3 L1746.5,283.8 L1747.3,287.8 L1748.4,285.1 L1749.5,280.3 L1750.7,286.0 L1751.8,289.3 L1752.9,288.1 L1754.0,287.7 L1755.2,285.5 L1756.3,284.0 L1757.4,280.8 L1758.5,280.3 L1759.5,280.3 L1760.5,282.5 L1761.5,285.5 L1762.7,281.6 L1763.8,278.8 L1764.9,276.3 L1766.0,278.1 L1767.2,276.0 L1768.3,275.3 L1769.4,274.3 L1770.5,272.8 L1771.7,280.2 L1772.8,286.3 L1774.0,284.0 L1775.3,280.0 L1776.5,279.5 L1777.7,288.8 L1778.8,296.0 L1779.8,293.6 L1780.8,289.5 L1781.8,286.3 L1783.0,282.7 L1784.3,279.4 L1785.5,275.0 L1786.6,273.0 L1787.6,275.3 L1788.7,273.2 L1789.7,272.2 L1790.8,273.5 L1792.0,276.6 L1793.3,282.3 L1794.5,285.5 L1795.6,281.5 L1796.8,280.6 L1797.9,278.6 L1799.0,273.9 L1800.0,276.7 L1801.0,279.2 L1802.0,282.5 L1803.0,279.7 L1804.0,277.7 L1805.0,274.3 L1806.0,277.0 L1807.0,278.2 L1808.0,279.5 L1809.0,276.8 L1810.0,271.4 L1811.0,269.8 L1812.0,268.7 L1813.0,269.3 L1814.0,270.5 L1815.0,269.7 L1816.1,266.1 L1817.2,265.4 L1818.2,263.3 L1819.3,260.6 L1820.3,260.1 L1821.4,261.2 L1822.4,275.2 L1823.5,291.5 L1824.5,305.8 L1825.6,298.6 L1826.6,290.8 L1827.7,282.4 L1828.8,277.9 L1829.8,275.1 L1830.9,271.2 L1832.0,267.6 L1833.0,271.2 L1834.1,275.0 L1835.4,267.8 L1836.7,265.2 L1837.9,256.6 L1839.2,254.2 L1840.5,246.4 L1841.5,252.9 L1842.6,253.5 L1843.6,260.2 L1844.7,259.7 L1845.7,260.8 L1846.8,259.1 L1847.9,255.5 L1848.9,247.5 L1850.0,242.1 L1851.3,238.7 L1852.6,236.1 L1853.8,237.3 L1855.1,231.4 L1856.4,230.5 L1857.6,228.8 L1858.9,224.5 L1860.1,224.2 L1861.3,224.3 L1862.6,218.0 L1863.8,217.7 L1864.9,221.5 L1865.9,222.0 L1867.0,224.1 L1868.0,222.6 L1869.1,218.3 L1870.2,212.3 L1871.2,210.3 L1872.5,211.0 L1873.8,207.3 L1875.0,203.3 L1876.3,201.7 L1877.6,202.9 L1878.7,206.4 L1879.7,209.7 L1880.8,213.5 L1882.0,204.8 L1883.3,196.3 L1884.5,190.7 L1885.7,193.9 L1887.0,197.8 L1888.2,202.9 L1889.2,199.5 L1890.3,192.3 L1891.4,195.6 L1892.4,206.0 L1893.5,212.5 L1894.5,214.9 L1895.6,223.0 L1896.7,217.6 L1897.7,209.0 L1898.8,200.2 L1900.0,209.4 L1901.3,213.1 L1902.5,220.5 L1903.7,227.6 L1905.0,237.5 L1906.2,242.1 L1907.5,238.1 L1908.8,232.6 L1910.0,228.4 L1911.3,223.2 L1912.6,219.9 L1913.7,223.4 L1914.7,229.4 L1915.8,238.6 L1916.8,241.8 L1917.9,248.5 L1919.0,246.0 L1920.0,238.4 L1921.1,234.0 L1922.1,230.7 L1923.2,226.2 L1924.3,228.6 L1925.3,233.4 L1926.4,237.9 L1927.5,235.3 L1928.5,230.2 L1929.5,225.1 L1930.6,218.8 L1931.7,223.0 L1932.7,227.9 L1933.8,229.4 L1934.8,224.7 L1935.9,215.6 L1937.0,215.1 L1938.1,215.2 L1939.1,210.8 L1940.2,212.4 L1941.3,206.3 L1942.3,197.3 L1943.4,190.2 L1944.4,189.0 L1945.5,185.7 L1946.5,182.2 L1946.5,391.5 L1076.8,391.5 Z" fill="#077a9d" fill-opacity="0.5"/>
<path d="M1076.8,361.0 L1078.0,360.6 L1079.3,360.2 L1080.5,361.0 L1081.8,359.9 L1083.0,360.5 L1084.0,360.8 L1085.0,361.0 L1086.0,361.6 L1087.0,362.0 L1088.0,363.6 L1089.0,364.5 L1090.0,362.7 L1091.0,362.4 L1092.0,361.5 L1093.2,360.5 L1094.5,360.3 L1095.8,360.6 L1097.0,361.1 L1098.2,359.6 L1099.5,359.5 L1100.8,360.0 L1102.0,359.5 L1103.1,360.6 L1104.3,360.2 L1105.4,360.2 L1106.6,361.5 L1107.7,360.1 L1108.9,361.8 L1110.0,361.5 L1111.2,360.9 L1112.5,360.5 L1113.8,360.3 L1115.0,360.4 L1116.2,361.1 L1117.5,359.8 L1118.8,360.3 L1120.0,360.0 L1121.2,360.4 L1122.4,360.2 L1123.6,360.7 L1124.8,360.0 L1126.0,361.0 L1127.0,362.0 L1128.0,364.5 L1129.2,362.9 L1130.5,362.6 L1131.8,361.0 L1133.0,360.0 L1134.2,360.0 L1135.3,360.8 L1136.5,360.9 L1137.7,361.0 L1138.8,362.2 L1140.0,362.0 L1141.0,362.6 L1142.0,362.1 L1143.0,362.9 L1144.0,363.0 L1145.0,365.0 L1146.0,367.0 L1147.0,366.4 L1148.0,364.5 L1149.1,364.6 L1150.3,363.6 L1151.4,364.4 L1152.6,362.7 L1153.7,362.9 L1154.9,363.2 L1156.0,362.5 L1157.0,362.3 L1158.0,363.2 L1159.0,362.9 L1160.0,364.0 L1161.0,363.4 L1162.0,362.8 L1163.0,361.5 L1164.2,362.0 L1165.3,363.0 L1166.5,362.4 L1167.7,363.5 L1168.8,363.7 L1170.0,364.0 L1171.2,364.9 L1172.5,365.4 L1173.8,366.8 L1175.0,367.0 L1176.0,369.4 L1177.0,370.5 L1178.0,369.5 L1179.0,368.8 L1180.0,367.5 L1181.0,367.6 L1182.0,369.3 L1183.0,370.0 L1184.0,370.5 L1185.2,370.5 L1186.4,369.6 L1187.6,368.1 L1188.8,367.5 L1190.0,367.0 L1191.0,367.5 L1192.0,366.7 L1193.0,367.7 L1194.0,368.0 L1195.2,368.1 L1196.5,368.7 L1197.8,369.2 L1199.0,370.5 L1200.2,370.5 L1201.4,369.0 L1202.7,368.8 L1203.9,368.6 L1205.1,368.9 L1206.3,367.2 L1207.6,367.3 L1208.8,367.0 L1210.0,366.5 L1211.2,367.0 L1212.5,366.8 L1213.8,366.7 L1215.0,365.6 L1216.2,365.7 L1217.5,365.5 L1218.8,366.2 L1220.0,365.5 L1221.2,365.9 L1222.5,364.2 L1223.8,363.8 L1225.0,363.6 L1226.2,363.2 L1227.5,363.2 L1228.8,363.0 L1230.0,362.5 L1231.1,362.2 L1232.3,361.9 L1233.4,362.8 L1234.6,362.9 L1235.7,363.3 L1236.9,364.1 L1238.0,363.5 L1239.2,363.5 L1240.3,362.9 L1241.5,362.7 L1242.7,362.5 L1243.8,361.1 L1245.0,361.5 L1246.2,362.7 L1247.4,363.0 L1248.6,363.6 L1249.8,364.0 L1251.0,364.0 L1252.3,363.7 L1253.6,363.5 L1254.9,362.9 L1256.1,363.7 L1257.4,362.6 L1258.7,362.4 L1260.0,363.0 L1261.2,362.0 L1262.5,361.4 L1263.8,361.2 L1265.0,361.0 L1266.2,360.4 L1267.5,360.4 L1268.8,360.8 L1270.0,361.5 L1271.1,361.0 L1272.3,361.6 L1273.4,361.1 L1274.6,362.7 L1275.7,362.4 L1276.9,361.8 L1278.0,362.5 L1279.2,361.7 L1280.3,361.6 L1281.5,361.3 L1282.7,360.5 L1283.8,361.4 L1285.0,360.5 L1286.2,361.5 L1287.5,360.7 L1288.8,360.8 L1290.0,361.0 L1291.2,360.6 L1292.4,360.9 L1293.6,361.6 L1294.8,361.8 L1296.0,362.5 L1297.0,362.4 L1298.0,360.7 L1299.0,359.8 L1300.0,360.0 L1301.2,360.5 L1302.5,359.5 L1303.8,358.6 L1305.0,359.0 L1306.2,357.8 L1307.5,358.5 L1308.8,359.0 L1310.0,358.5 L1311.2,358.0 L1312.5,356.9 L1313.8,356.8 L1315.0,356.8 L1316.2,357.0 L1317.5,358.9 L1318.8,359.3 L1320.0,360.0 L1321.2,360.5 L1322.5,359.7 L1323.8,359.5 L1325.0,360.0 L1326.2,360.0 L1327.3,359.7 L1328.5,358.9 L1329.7,358.2 L1330.8,357.7 L1332.0,356.5 L1333.3,356.9 L1334.6,355.9 L1335.9,356.4 L1337.2,356.0 L1338.5,355.4 L1339.8,355.3 L1341.1,355.7 L1342.4,355.7 L1343.7,356.4 L1345.0,356.0 L1346.0,357.6 L1347.0,357.5 L1348.1,356.8 L1349.3,357.0 L1350.4,356.5 L1351.6,355.8 L1352.7,354.0 L1353.9,353.1 L1355.0,353.0 L1356.2,352.3 L1357.5,352.2 L1358.8,352.1 L1360.0,352.5 L1361.0,353.6 L1362.0,354.9 L1363.0,355.0 L1364.2,354.6 L1365.5,353.0 L1366.8,352.3 L1368.0,351.0 L1369.0,352.5 L1370.0,351.9 L1371.0,353.9 L1372.0,354.5 L1373.0,354.6 L1374.0,353.7 L1375.0,352.5 L1376.0,354.0 L1377.0,354.5 L1378.0,355.5 L1379.2,355.2 L1380.5,356.5 L1381.8,355.9 L1383.0,356.5 L1384.0,356.2 L1385.0,355.6 L1386.0,353.7 L1387.0,353.0 L1388.2,353.1 L1389.5,354.4 L1390.8,354.2 L1392.0,354.0 L1393.0,354.4 L1394.0,355.3 L1395.0,356.4 L1396.0,358.0 L1397.0,358.4 L1398.0,357.8 L1399.0,356.2 L1400.0,356.5 L1401.0,357.8 L1402.0,358.9 L1403.0,359.0 L1404.0,359.5 L1405.0,365.0 L1406.0,365.6 L1407.0,366.8 L1408.0,367.0 L1409.0,368.5 L1410.0,366.7 L1411.0,367.3 L1412.0,365.7 L1413.0,364.5 L1414.2,365.7 L1415.4,367.6 L1416.6,368.0 L1417.8,369.9 L1419.0,370.5 L1420.0,369.9 L1421.0,367.8 L1422.0,366.7 L1423.0,366.0 L1424.2,365.4 L1425.3,365.1 L1426.5,365.4 L1427.7,364.6 L1428.8,364.6 L1430.0,364.5 L1431.0,363.4 L1432.0,364.2 L1433.0,362.8 L1434.0,362.5 L1435.2,362.0 L1436.5,361.9 L1437.7,362.0 L1438.9,360.8 L1440.2,361.3 L1441.4,360.2 L1442.6,359.9 L1443.8,359.5 L1445.1,358.2 L1446.3,358.5 L1447.5,357.7 L1448.8,357.0 L1450.0,357.5 L1451.0,358.7 L1452.0,358.2 L1453.0,359.3 L1454.0,360.0 L1455.2,359.6 L1456.4,358.5 L1457.6,357.3 L1458.8,356.8 L1460.0,356.0 L1461.2,357.1 L1462.5,358.5 L1463.8,358.3 L1465.0,360.0 L1466.2,359.6 L1467.5,358.6 L1468.8,358.1 L1470.0,358.0 L1471.0,358.7 L1472.0,358.5 L1473.0,358.9 L1474.0,359.0 L1475.2,358.5 L1476.4,357.8 L1477.6,355.9 L1478.8,355.2 L1480.0,354.0 L1481.2,353.6 L1482.4,353.2 L1483.7,353.2 L1484.9,352.4 L1486.1,352.1 L1487.3,351.6 L1488.6,352.1 L1489.8,351.3 L1491.0,350.5 L1492.0,351.9 L1493.0,352.7 L1494.0,352.5 L1495.0,351.2 L1496.0,350.9 L1497.0,350.8 L1498.0,349.0 L1499.2,350.4 L1500.5,349.8 L1501.8,350.5 L1503.0,352.0 L1504.0,351.2 L1505.0,349.8 L1506.0,350.0 L1507.0,351.7 L1508.0,353.5 L1509.0,356.5 L1510.2,356.9 L1511.5,357.3 L1512.8,357.6 L1514.0,357.0 L1515.0,354.1 L1516.0,352.5 L1517.0,353.3 L1518.0,353.6 L1519.0,352.9 L1520.0,354.0 L1521.2,353.9 L1522.4,353.3 L1523.6,351.1 L1524.8,351.7 L1526.0,350.0 L1527.3,349.6 L1528.6,349.5 L1529.9,350.3 L1531.1,349.8 L1532.4,348.2 L1533.7,348.6 L1535.0,348.5 L1536.0,349.0 L1537.0,349.2 L1538.0,350.0 L1539.2,348.9 L1540.4,348.6 L1541.6,349.0 L1542.8,347.0 L1544.0,347.6 L1545.2,346.9 L1546.4,345.5 L1547.6,345.6 L1548.8,345.8 L1550.0,345.0 L1551.2,345.5 L1552.5,345.1 L1553.8,347.5 L1555.0,347.0 L1556.1,346.8 L1557.3,346.4 L1558.4,343.8 L1559.6,343.4 L1560.7,342.1 L1561.9,342.9 L1563.0,341.5 L1564.1,341.0 L1565.3,340.7 L1566.4,341.3 L1567.6,342.4 L1568.7,342.2 L1569.9,341.0 L1571.0,341.5 L1572.0,339.9 L1573.0,340.8 L1574.0,339.0 L1575.0,340.0 L1576.0,341.1 L1577.0,341.5 L1578.3,339.9 L1579.6,339.2 L1580.9,340.0 L1582.1,338.8 L1583.4,337.3 L1584.7,338.6 L1586.0,337.0 L1587.0,337.8 L1588.0,338.0 L1589.1,337.6 L1590.3,334.9 L1591.4,335.6 L1592.6,332.7 L1593.7,333.5 L1594.9,331.5 L1596.0,330.5 L1597.0,330.7 L1598.0,331.9 L1599.0,333.4 L1600.0,333.0 L1601.2,331.5 L1602.4,330.3 L1603.6,330.4 L1604.8,328.7 L1606.0,328.5 L1607.3,327.2 L1608.6,326.9 L1609.9,326.3 L1611.1,326.3 L1612.4,326.2 L1613.7,325.9 L1615.0,326.0 L1616.2,326.6 L1617.3,325.3 L1618.5,325.8 L1619.7,324.8 L1620.8,325.2 L1622.0,325.5 L1623.0,325.9 L1624.0,328.2 L1625.0,330.5 L1626.0,327.7 L1627.0,327.8 L1628.0,325.8 L1629.0,324.0 L1630.2,323.8 L1631.5,325.2 L1632.8,327.0 L1634.0,326.5 L1635.2,324.4 L1636.5,325.1 L1637.8,322.9 L1639.0,322.0 L1640.3,321.9 L1641.5,322.8 L1642.8,321.6 L1644.1,321.8 L1645.4,322.3 L1646.6,323.0 L1647.9,321.3 L1649.2,322.5 L1650.5,322.1 L1651.7,321.9 L1653.0,321.5 L1654.0,321.7 L1655.0,322.1 L1656.0,323.0 L1657.0,329.0 L1658.0,327.4 L1659.0,327.1 L1660.0,326.4 L1661.0,327.0 L1662.0,325.9 L1663.0,322.9 L1664.0,320.8 L1665.0,320.0 L1666.2,319.1 L1667.5,321.4 L1668.8,321.7 L1670.0,321.0 L1671.0,323.6 L1672.0,324.8 L1673.0,327.5 L1674.2,325.3 L1675.4,324.0 L1676.6,322.9 L1677.8,320.6 L1679.0,320.0 L1680.2,319.4 L1681.4,318.5 L1682.6,319.9 L1683.8,319.5 L1685.0,317.8 L1686.0,319.2 L1687.0,319.6 L1688.0,321.5 L1689.2,320.0 L1690.3,316.0 L1691.6,315.6 L1692.9,315.9 L1694.2,315.0 L1695.4,316.2 L1696.7,316.6 L1698.0,316.9 L1699.3,317.0 L1700.0,317.1 L1700.8,318.9 L1701.8,317.8 L1702.9,315.3 L1703.9,314.9 L1705.0,313.3 L1706.0,313.3 L1707.1,312.7 L1708.2,311.3 L1709.4,310.9 L1710.5,312.0 L1711.7,309.4 L1712.8,308.0 L1713.9,307.4 L1715.0,308.7 L1716.2,308.7 L1717.3,308.8 L1718.4,308.3 L1719.5,306.8 L1720.7,305.7 L1721.8,305.0 L1722.9,302.2 L1724.0,301.3 L1725.1,299.8 L1726.2,301.0 L1727.4,297.3 L1728.5,297.5 L1729.5,298.7 L1730.5,299.0 L1731.5,299.0 L1732.6,295.6 L1733.8,296.4 L1734.9,294.7 L1736.0,291.5 L1737.2,290.8 L1738.4,290.1 L1739.6,289.2 L1740.8,285.8 L1742.0,285.9 L1743.3,283.1 L1744.5,280.2 L1745.8,277.3 L1746.5,283.8 L1747.3,287.8 L1748.4,285.1 L1749.5,280.3 L1750.7,286.0 L1751.8,289.3 L1752.9,288.1 L1754.0,287.7 L1755.2,285.5 L1756.3,284.0 L1757.4,280.8 L1758.5,280.3 L1759.5,280.3 L1760.5,282.5 L1761.5,285.5 L1762.7,281.6 L1763.8,278.8 L1764.9,276.3 L1766.0,278.1 L1767.2,276.0 L1768.3,275.3 L1769.4,274.3 L1770.5,272.8 L1771.7,280.2 L1772.8,286.3 L1774.0,284.0 L1775.3,280.0 L1776.5,279.5 L1777.7,288.8 L1778.8,296.0 L1779.8,293.6 L1780.8,289.5 L1781.8,286.3 L1783.0,282.7 L1784.3,279.4 L1785.5,275.0 L1786.6,273.0 L1787.6,275.3 L1788.7,273.2 L1789.7,272.2 L1790.8,273.5 L1792.0,276.6 L1793.3,282.3 L1794.5,285.5 L1795.6,281.5 L1796.8,280.6 L1797.9,278.6 L1799.0,273.9 L1800.0,276.7 L1801.0,279.2 L1802.0,282.5 L1803.0,279.7 L1804.0,277.7 L1805.0,274.3 L1806.0,277.0 L1807.0,278.2 L1808.0,279.5 L1809.0,276.8 L1810.0,271.4 L1811.0,269.8 L1812.0,268.7 L1813.0,269.3 L1814.0,270.5 L1815.0,269.7 L1816.1,266.1 L1817.2,265.4 L1818.2,263.3 L1819.3,260.6 L1820.3,260.1 L1821.4,261.2 L1822.4,275.2 L1823.5,291.5 L1824.5,305.8 L1825.6,298.6 L1826.6,290.8 L1827.7,282.4 L1828.8,277.9 L1829.8,275.1 L1830.9,271.2 L1832.0,267.6 L1833.0,271.2 L1834.1,275.0 L1835.4,267.8 L1836.7,265.2 L1837.9,256.6 L1839.2,254.2 L1840.5,246.4 L1841.5,252.9 L1842.6,253.5 L1843.6,260.2 L1844.7,259.7 L1845.7,260.8 L1846.8,259.1 L1847.9,255.5 L1848.9,247.5 L1850.0,242.1 L1851.3,238.7 L1852.6,236.1 L1853.8,237.3 L1855.1,231.4 L1856.4,230.5 L1857.6,228.8 L1858.9,224.5 L1860.1,224.2 L1861.3,224.3 L1862.6,218.0 L1863.8,217.7 L1864.9,221.5 L1865.9,222.0 L1867.0,224.1 L1868.0,222.6 L1869.1,218.3 L1870.2,212.3 L1871.2,210.3 L1872.5,211.0 L1873.8,207.3 L1875.0,203.3 L1876.3,201.7 L1877.6,202.9 L1878.7,206.4 L1879.7,209.7 L1880.8,213.5 L1882.0,204.8 L1883.3,196.3 L1884.5,190.7 L1885.7,193.9 L1887.0,197.8 L1888.2,202.9 L1889.2,199.5 L1890.3,192.3 L1891.4,195.6 L1892.4,206.0 L1893.5,212.5 L1894.5,214.9 L1895.6,223.0 L1896.7,217.6 L1897.7,209.0 L1898.8,200.2 L1900.0,209.4 L1901.3,213.1 L1902.5,220.5 L1903.7,227.6 L1905.0,237.5 L1906.2,242.1 L1907.5,238.1 L1908.8,232.6 L1910.0,228.4 L1911.3,223.2 L1912.6,219.9 L1913.7,223.4 L1914.7,229.4 L1915.8,238.6 L1916.8,241.8 L1917.9,248.5 L1919.0,246.0 L1920.0,238.4 L1921.1,234.0 L1922.1,230.7 L1923.2,226.2 L1924.3,228.6 L1925.3,233.4 L1926.4,237.9 L1927.5,235.3 L1928.5,230.2 L1929.5,225.1 L1930.6,218.8 L1931.7,223.0 L1932.7,227.9 L1933.8,229.4 L1934.8,224.7 L1935.9,215.6 L1937.0,215.1 L1938.1,215.2 L1939.1,210.8 L1940.2,212.4 L1941.3,206.3 L1942.3,197.3 L1943.4,190.2 L1944.4,189.0 L1945.5,185.7 L1946.5,182.2" fill="none" stroke="#0b7a9c" stroke-width="2.7" stroke-linejoin="round"/>
<line x1="1061" x2="1957" y1="391.5" y2="391.5" stroke="#9a9a9a" stroke-width="1.5"/>
</g>
<text x="1057.8" y="397.50" font-size="15" fill="#555" text-anchor="end">0</text>
<text x="1057.8" y="316.30" font-size="15" fill="#555" text-anchor="end">2K</text>
<text x="1057.8" y="235.10" font-size="15" fill="#555" text-anchor="end">4K</text>
<text x="1057.8" y="153.90" font-size="15" fill="#555" text-anchor="end">6K</text>
<text x="1083.60" y="417.5" font-size="15" fill="#555" text-anchor="middle">Jan 01, 2000</text>
<text x="1230.20" y="417.5" font-size="15" fill="#555" text-anchor="middle">Jan 01, 2004</text>
<text x="1376.30" y="417.5" font-size="15" fill="#555" text-anchor="middle">Jan 01, 2008</text>
<text x="1524.00" y="417.5" font-size="15" fill="#555" text-anchor="middle">Jan 01, 2012</text>
<text x="1670.80" y="417.5" font-size="15" fill="#555" text-anchor="middle">Jan 01, 2016</text>
<text x="1817.20" y="417.5" font-size="15" fill="#555" text-anchor="middle">Jan 01, 2020</text>
<text x="1512.4" y="437" font-size="16.2" font-weight="bold" fill="#555" stroke="#555" stroke-width="0.35" text-anchor="middle">date</text>
<text transform="translate(1030.6,269.3) rotate(-90)" font-size="16.2" font-weight="bold" fill="#555" stroke="#555" stroke-width="0.35" text-anchor="middle">Adjusted Close Price</text>
<line x1="1072.6" x2="1957" y1="648.40" y2="648.40" stroke="#e3e3e3" stroke-width="1"/>
<line x1="1072.6" x2="1957" y1="526.80" y2="526.80" stroke="#e3e3e3" stroke-width="1"/>
<line x1="1080.00" x2="1080.00" y1="526.5" y2="770" stroke="#e3e3e3" stroke-width="1"/>
<line x1="1080.00" x2="1080.00" y1="775" y2="780.5" stroke="#d6d6d6" stroke-width="1"/>
<line x1="1247.30" x2="1247.30" y1="526.5" y2="770" stroke="#e3e3e3" stroke-width="1"/>
<line x1="1247.30" x2="1247.30" y1="775" y2="780.5" stroke="#d6d6d6" stroke-width="1"/>
<line x1="1414.40" x2="1414.40" y1="526.5" y2="770" stroke="#e3e3e3" stroke-width="1"/>
<line x1="1414.40" x2="1414.40" y1="775" y2="780.5" stroke="#d6d6d6" stroke-width="1"/>
<line x1="1582.60" x2="1582.60" y1="526.5" y2="770" stroke="#e3e3e3" stroke-width="1"/>
<line x1="1582.60" x2="1582.60" y1="775" y2="780.5" stroke="#d6d6d6" stroke-width="1"/>
<line x1="1750.40" x2="1750.40" y1="526.5" y2="770" stroke="#e3e3e3" stroke-width="1"/>
<line x1="1750.40" x2="1750.40" y1="775" y2="780.5" stroke="#d6d6d6" stroke-width="1"/>
<line x1="1917.10" x2="1917.10" y1="526.5" y2="770" stroke="#e3e3e3" stroke-width="1"/>
<line x1="1917.10" x2="1917.10" y1="775" y2="780.5" stroke="#d6d6d6" stroke-width="1"/>
<line x1="1072.6" x2="1957" y1="770" y2="770" stroke="#9a9a9a" stroke-width="1.5"/>
<path d="M1087.4,717.5 L1098.7,731.5 L1108.9,697.4 L1119.6,747.6 L1129.8,708.7 L1140.6,704.6 L1150.5,701.9 L1161.3,667.5 L1171.5,717.3 L1182.0,686.6 L1192.7,704.6 L1203.0,722.1 L1213.7,658.4 L1223.9,722.6 L1234.7,711.9 L1245.2,692.5 L1255.4,690.6 L1266.1,719.4 L1276.3,709.2 L1287.1,728.3 L1297.6,685.0 L1307.8,718.9 L1318.5,725.3 L1328.8,736.3 L1339.2,705.4 L1349.5,740.4 L1360.2,723.4 L1371.0,709.2 L1381.2,724.0 L1391.6,707.9 L1402.0,713.9 L1412.4,723.7 L1423.1,698.7 L1433.6,711.2 L1443.9,720.9 L1454.3,715.4 L1465.0,736.4 L1475.5,659.7 L1486.0,730.5 L1496.3,727.4 L1507.1,699.2 L1517.4,663.0 L1527.9,698.0 L1538.2,602.2 L1548.6,653.8 L1559.1,547.2 L1569.8,664.3 L1580.3,635.4 L1590.7,672.6 L1601.4,638.0 L1611.9,641.3 L1622.2,609.5 L1632.6,630.8 L1643.3,652.0 L1653.8,676.6 L1663.9,728.3 L1674.4,702.9 L1684.7,690.0 L1695.4,711.2 L1706.0,635.4 L1716.2,691.3 L1726.8,687.0 L1737.2,710.0 L1747.9,716.8 L1758.0,699.9 L1768.7,703.3 L1779.1,677.2 L1789.7,690.8 L1799.9,666.6 L1810.5,687.4 L1821.0,722.0 L1831.1,719.1 L1841.8,690.1 L1852.4,730.9 L1862.8,707.3 L1873.4,716.4 L1884.1,707.8 L1894.5,716.8 L1904.7,736.1 L1915.3,732.0 L1925.9,729.7 L1936.1,697.1 L1946.5,739.5" fill="none" stroke="#0b7a9c" stroke-width="2.4" stroke-linejoin="miter"/>
<text x="1068.5" y="776.00" font-size="15" fill="#555" text-anchor="end">0</text>
<text x="1068.5" y="654.40" font-size="15" fill="#555" text-anchor="end">0.05</text>
<text x="1068.5" y="532.80" font-size="15" fill="#555" text-anchor="end">0.1</text>
<text x="1080" y="795" font-size="15" fill="#555" text-anchor="start">Nov 20, 2007</text>
<text x="1247.30" y="795" font-size="15" fill="#555" text-anchor="middle">Mar 11, 2008</text>
<text x="1414.40" y="795" font-size="15" fill="#555" text-anchor="middle">Jul 01, 2008</text>
<text x="1582.60" y="795" font-size="15" fill="#555" text-anchor="middle">Oct 21, 2008</text>
<text x="1750.40" y="795" font-size="15" fill="#555" text-anchor="middle">Feb 10, 2009</text>
<text x="1960.5" y="795" font-size="15" fill="#555" text-anchor="end">Jun 02, 2009</text>
<text x="1518" y="815.5" font-size="16.2" font-weight="bold" fill="#555" stroke="#555" stroke-width="0.35" text-anchor="middle">week_start</text>
<text transform="translate(1030.8,648) rotate(-90)" font-size="16.2" font-weight="bold" fill="#555" stroke="#555" stroke-width="0.35" text-anchor="middle">Sum of volatility</text>
<path d="M420.50,993.70 A215.5,215.5 0 0 1 561.88,1046.56 L491.16,1127.92 A107.7,107.7 0 0 0 420.50,1101.50 Z" fill="#8bcae7" stroke="#8bcae7" stroke-width="0.6"/>
<path d="M561.88,1046.56 A215.5,215.5 0 0 1 631.52,1252.90 L525.96,1231.04 A107.7,107.7 0 0 0 491.16,1127.92 Z" fill="#ff3621" stroke="#ff3621" stroke-width="0.6"/>
<path d="M631.52,1252.90 A215.5,215.5 0 0 1 442.28,1423.60 L431.38,1316.35 A107.7,107.7 0 0 0 525.96,1231.04 Z" fill="#00a972" stroke="#00a972" stroke-width="0.6"/>
<path d="M442.28,1423.60 A215.5,215.5 0 0 1 209.18,1251.43 L314.89,1230.30 A107.7,107.7 0 0 0 431.38,1316.35 Z" fill="#ffab00" stroke="#ffab00" stroke-width="0.6"/>
<path d="M209.18,1251.43 A215.5,215.5 0 0 1 420.50,993.70 L420.50,1101.50 A107.7,107.7 0 0 0 314.89,1230.30 Z" fill="#077a9d" stroke="#077a9d" stroke-width="0.6"/>
<text x="420.8" y="985.3" font-size="16.2" font-weight="bold" fill="#555" stroke="#555" stroke-width="0.35" text-anchor="middle">Total capitalization</text>
<text x="819.8" y="984.3" font-size="16.2" font-weight="bold" fill="#555" stroke="#555" stroke-width="0.35">Company</text>
<rect x="819" y="996.80" width="15.2" height="15" fill="#077a9d"/>
<text x="841.3" y="1009.40" font-size="15" fill="#555">Microsoft Corp</text>
<rect x="819" y="1022.00" width="15.2" height="15" fill="#ffab00"/>
<text x="841.3" y="1034.60" font-size="15" fill="#555">Apple Inc</text>
<rect x="819" y="1047.20" width="15.2" height="15" fill="#00a972"/>
<text x="841.3" y="1059.80" font-size="15" fill="#555">NVIDIA Corp</text>
<rect x="819" y="1072.40" width="15.2" height="15" fill="#ff3621"/>
<text x="841.3" y="1085.00" font-size="15" fill="#555">Amazon.com Inc</text>
<rect x="819" y="1097.60" width="15.2" height="15" fill="#8bcae7"/>
<text x="841.3" y="1110.20" font-size="15" fill="#555">Meta Platforms Inc</text>
</svg>
<div class="t" style="left:1015.4px;top:105.09px;font-size:16.7px;font-weight:bold;color:#11171c;font-style:normal;letter-spacing:0px;">Ticker evolution</div>
<div class="t" style="left:1014.6px;top:483.69px;font-size:16.7px;font-weight:bold;color:#11171c;font-style:normal;letter-spacing:0px;">Market volatility over week</div>
<div class="t" style="left:32.2px;top:937.69px;font-size:16.7px;font-weight:bold;color:#11171c;font-style:normal;letter-spacing:0px;">Portfolio Top market capitalization</div>
<div class="t" style="left:1015px;top:938.09px;font-size:16.7px;font-weight:bold;color:#11171c;font-style:normal;letter-spacing:0px;">Latest negative event impacting our portfolio - Analyzed with DBRX</div>
<div style="position:absolute;left:1011.25px;top:966.75px;width:952.4px;height:448px;overflow:hidden">
<div style="position:absolute;left:0;top:0;width:952.4px;height:46px;background:#f5f6f8;border-radius:5px 5px 0 0;border-bottom:1px solid #e6e8eb"></div>
<div style="position:absolute;left:179.6px;top:7px;width:1px;height:30.5px;background:#dfe2e6"></div>
<div class="t" style="left:19.5px;top:15.26px;font-size:17px;color:#1f272d;letter-spacing:0.3px;font-weight:normal">published_date</div>
<div class="t" style="left:200.75px;top:15.26px;font-size:17px;color:#1f272d;letter-spacing:0.1px;font-weight:normal">title</div>
<div class="t" style="left:18.8px;top:57.37px;font-size:17px;color:#1f272d;letter-spacing:1.13px;font-weight:normal">2023-09-26</div>
<div class="t" style="left:200.75px;top:57.37px;font-size:17px;color:#1f272d;letter-spacing:0px;font-weight:normal">Investor Fear Eases After US Stocks Snap 4-Session Losing Streak - Costco Wholesale &nbsp;( NASDAQ:COST )</div>
<div style="position:absolute;left:0;top:84.40px;width:952.4px;height:1px;background:#e8eaed"></div>
<svg width="20" height="20" style="left:187.50px;top:60.25px"><path d="M0,1.5 L5,6 L0,10.5 Z" fill="#b7bdc3"/></svg>
<div class="t" style="left:18.8px;top:97.02px;font-size:17px;color:#1f272d;letter-spacing:1.13px;font-weight:normal">2023-09-25</div>
<div class="t" style="left:200.75px;top:97.02px;font-size:17px;color:#1f272d;letter-spacing:0.1px;font-weight:normal">Micron earnings preview: How much has AI benefited the memory-chip maker?</div>
<div style="position:absolute;left:0;top:124.05px;width:952.4px;height:1px;background:#e8eaed"></div>
<div class="t" style="left:18.8px;top:136.66px;font-size:17px;color:#1f272d;letter-spacing:1.13px;font-weight:normal">2023-09-25</div>
<div class="t" style="left:200.75px;top:136.66px;font-size:17px;color:#1f272d;letter-spacing:0.1px;font-weight:normal">Micron earnings preview: How much has AI benefited the memory-chip maker?</div>
<div style="position:absolute;left:0;top:163.70px;width:952.4px;height:1px;background:#e8eaed"></div>
<div class="t" style="left:18.8px;top:176.32px;font-size:17px;color:#1f272d;letter-spacing:1.13px;font-weight:normal">2023-09-25</div>
<div class="t" style="left:200.75px;top:176.32px;font-size:17px;color:#1f272d;letter-spacing:0.1px;font-weight:normal">Minecraft Creator Notch: 'Glad They're Cracking Down' on Bitcoin Reward Servers</div>
<div style="position:absolute;left:0;top:203.35px;width:952.4px;height:1px;background:#e8eaed"></div>
<div class="t" style="left:18.8px;top:215.96px;font-size:17px;color:#1f272d;letter-spacing:1.13px;font-weight:normal">2023-09-25</div>
<div class="t" style="left:200.75px;top:215.96px;font-size:17px;color:#1f272d;letter-spacing:0.1px;font-weight:normal">What the Hollywood Writers' Deal Means</div>
<div style="position:absolute;left:0;top:243.00px;width:952.4px;height:1px;background:#e8eaed"></div>
<div class="t" style="left:18.8px;top:255.62px;font-size:17px;color:#1f272d;letter-spacing:1.13px;font-weight:normal">2023-09-25</div>
<div class="t" style="left:200.75px;top:255.62px;font-size:17px;color:#1f272d;letter-spacing:0.1px;font-weight:normal">What the Hollywood Writers' Deal Means</div>
<div style="position:absolute;left:0;top:282.65px;width:952.4px;height:1px;background:#e8eaed"></div>
<div class="t" style="left:18.8px;top:295.27px;font-size:17px;color:#1f272d;letter-spacing:1.13px;font-weight:normal">2023-09-25</div>
<div class="t" style="left:200.75px;top:295.27px;font-size:17px;color:#1f272d;letter-spacing:0.243px;font-weight:normal">Pfizer restarts production at tornado-damaged facility, but some supply is still affected</div>
<div style="position:absolute;left:0;top:322.30px;width:952.4px;height:1px;background:#e8eaed"></div>
<div class="t" style="left:18.8px;top:334.91px;font-size:17px;color:#1f272d;letter-spacing:1.13px;font-weight:normal">2023-09-25</div>
<div class="t" style="left:200.75px;top:334.91px;font-size:17px;color:#1f272d;letter-spacing:0px;font-weight:normal">Is Cybertruck A Failure? Here's What People Are Saying About The EV And Elon's Thoughts On Potential Demand</div>
<div style="position:absolute;left:0;top:361.95px;width:952.4px;height:1px;background:#e8eaed"></div>
<svg width="20" height="20" style="left:187.50px;top:337.80px"><path d="M0,1.5 L5,6 L0,10.5 Z" fill="#b7bdc3"/></svg>
<div class="t" style="left:18.8px;top:374.57px;font-size:17px;color:#1f272d;letter-spacing:1.13px;font-weight:normal">2023-09-25</div>
<div class="t" style="left:200.75px;top:374.57px;font-size:17px;color:#1f272d;letter-spacing:0px;font-weight:normal">Tax Cuts From The Bush And Trump Eras Have Cost The Government $10 Trillion It Now Owes - Apple</div>
<div style="position:absolute;left:0;top:401.60px;width:952.4px;height:1px;background:#e8eaed"></div>
<div class="t" style="left:18.8px;top:414.21px;font-size:17px;color:#1f272d;letter-spacing:1.13px;font-weight:normal">2023-09-25</div>
<div class="t" style="left:200.75px;top:414.21px;font-size:17px;color:#1f272d;letter-spacing:0.064px;font-weight:normal">Travis Kelce's Ads For Pfizer And Bud Light Draw Right-Wing Anger</div>
<div style="position:absolute;left:0;top:445.75px;width:952.4px;height:1px;background:#e8eaed"></div>
</div>
</body></html>
